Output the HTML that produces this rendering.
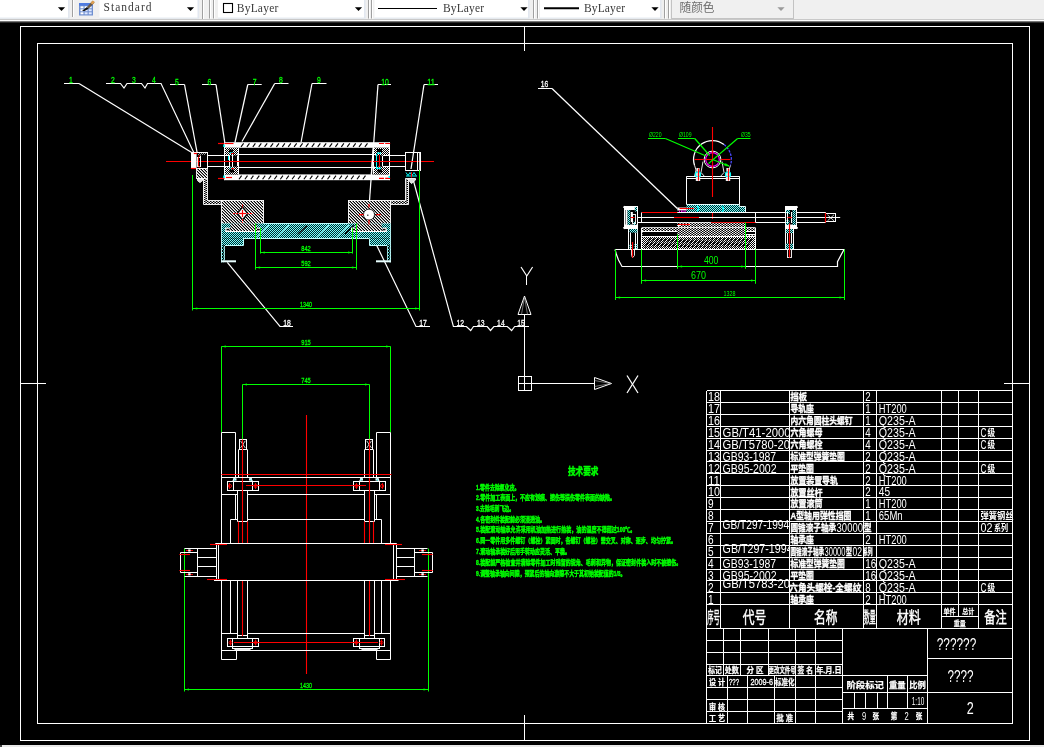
<!DOCTYPE html>
<html lang="zh"><head><meta charset="utf-8"><title>CAD</title>
<style>
html,body{margin:0;padding:0;background:#000;overflow:hidden}
svg{display:block;will-change:transform}
text{font-family:"Liberation Sans","Noto Sans CJK SC",sans-serif;white-space:pre}
.m{font-family:"Liberation Mono","Noto Sans CJK SC",monospace}
.s{font-family:"Liberation Serif","Noto Serif CJK SC",serif}
.cj{font-family:"Liberation Sans","Noto Sans CJK SC",sans-serif}
</style></head><body>
<svg width="1044" height="747" viewBox="0 0 1044 747">
<defs>
<pattern id="chk" width="2" height="2" patternUnits="userSpaceOnUse"><rect width="2" height="2" fill="#002a2a"/><rect width="1" height="1" fill="#7ff"/><rect x="1" y="1" width="1" height="1" fill="#7ff"/></pattern>
<pattern id="chks" width="2" height="3" patternUnits="userSpaceOnUse"><rect width="2" height="3" fill="#000"/><rect width="1" height="1" fill="#5ff"/><rect x="1" y="1.5" width="1" height="1" fill="#5ff"/></pattern>
<pattern id="wh" width="3" height="3" patternUnits="userSpaceOnUse"><rect width="3" height="3" fill="#000"/><rect x="0" y="0" width="1" height="1" fill="#fff"/><rect x="1" y="0" width="1" height="1" fill="#8c8c8c"/><rect x="1" y="1" width="1" height="1" fill="#fff"/><rect x="2" y="1" width="1" height="1" fill="#8c8c8c"/><rect x="0" y="2" width="1" height="1" fill="#8c8c8c"/><rect x="2" y="2" width="1" height="1" fill="#fff"/></pattern>
<pattern id="dots" width="2" height="2" patternUnits="userSpaceOnUse"><rect width="2" height="2" fill="#000"/><rect width="1" height="1" fill="#fff"/><rect x="1" y="1" width="1" height="1" fill="#fff"/></pattern>
<pattern id="dots2" width="3" height="2" patternUnits="userSpaceOnUse"><rect width="3" height="2" fill="#000"/><rect width="1.4" height="1" fill="#fff"/><rect x="1.5" y="1" width="1.4" height="1" fill="#fff"/></pattern>
<pattern id="wh2" width="2" height="2" patternUnits="userSpaceOnUse"><rect width="2" height="2" fill="#000"/><rect width="1" height="1" fill="#fff"/><rect x="1" y="1" width="1" height="1" fill="#fff"/></pattern>
</defs>
<rect x="0" y="0" width="1044" height="747" fill="#000"/>
<g id="toolbar">
<rect x="0" y="0" width="1044" height="21" fill="#f0f0f0"/>
<rect x="0" y="19" width="1044" height="1" fill="#c9c9c9"/>
<rect x="0" y="20" width="1044" height="1.2" fill="#fdfdfd"/>
<rect x="0" y="21.2" width="1044" height="0.8" fill="#8a8a8a"/>
<rect x="0" y="22" width="1044" height="1" fill="#2a2a2a"/>
<rect x="0" y="0" width="69" height="18" fill="#fff"/>
<rect x="68" y="0" width="1.6" height="18" fill="#e3e8f0"/>
<rect x="0" y="17.6" width="69.6" height="1" fill="#dfe6ee"/>
<polygon points="57.9,7.2 65.1,7.2 61.5,11" fill="#000" stroke="none" stroke-width="0"/>
<line x1="72.5" y1="0" x2="72.5" y2="17" stroke="#a0a0a0" stroke-width="1"/>
<line x1="73.5" y1="0" x2="73.5" y2="17" stroke="#fff" stroke-width="1"/>
<g><rect x="79" y="3" width="14" height="12.5" fill="#6f8fd0"/><rect x="79" y="3" width="14" height="2.6" fill="#4f7be0"/><rect x="80.5" y="6.3" width="3" height="2" fill="#fff"/><rect x="84.6" y="6.3" width="3" height="2" fill="#fff"/><rect x="88.7" y="6.3" width="3" height="2" fill="#e6eeff"/><rect x="80.5" y="9.3" width="3" height="2" fill="#fff"/><rect x="84.6" y="9.3" width="3" height="2" fill="#dfe8ff"/><rect x="88.7" y="9.3" width="3" height="2" fill="#dfe8ff"/><rect x="80.5" y="12.3" width="3" height="2" fill="#fff"/><rect x="84.6" y="12.3" width="3" height="2" fill="#dfe8ff"/><rect x="88.7" y="12.3" width="3" height="2" fill="#dfe8ff"/><path d="M82,11 L87,7 L88.6,8.8 L84.5,10.9 Z" fill="#111"/><path d="M87,7 L92.5,0.8 L94.6,2.4 L88.6,8.8 Z" fill="#6b5a44"/><path d="M90.5,3 L92.8,0.4 L94.8,2 L92.4,4.6 Z" fill="#e0a050"/></g>
<rect x="99.5" y="0" width="99" height="18" fill="#fff"/>
<rect x="197.5" y="0" width="1.6" height="18" fill="#e3e8f0"/>
<rect x="99.5" y="17.6" width="99.6" height="1" fill="#dfe6ee"/>
<polygon points="186.9,7.2 194.1,7.2 190.5,11" fill="#000" stroke="none" stroke-width="0"/>
<text x="103.5" y="11.2" font-size="11.5" fill="#3a3a3a" textLength="48" lengthAdjust="spacing" class="s">Standard</text>
<line x1="202.5" y1="0" x2="202.5" y2="19" stroke="#a0a0a0" stroke-width="1"/>
<line x1="203.5" y1="0" x2="203.5" y2="19" stroke="#fff" stroke-width="1"/>
<line x1="209.5" y1="0" x2="209.5" y2="18.5" stroke="#a0a0a0" stroke-width="1"/>
<line x1="210.5" y1="0" x2="210.5" y2="18.5" stroke="#fff" stroke-width="1"/>
<line x1="213.5" y1="0" x2="213.5" y2="18.5" stroke="#a0a0a0" stroke-width="1"/>
<line x1="214.5" y1="0" x2="214.5" y2="18.5" stroke="#fff" stroke-width="1"/>
<rect x="218" y="0" width="147" height="18" fill="#fff"/>
<rect x="364" y="0" width="1.6" height="18" fill="#e3e8f0"/>
<rect x="218" y="17.6" width="147.6" height="1" fill="#dfe6ee"/>
<polygon points="354.9,7.2 362.1,7.2 358.5,11" fill="#000" stroke="none" stroke-width="0"/>
<rect x="223.5" y="3.5" width="9" height="9" fill="#fff" stroke="#000" stroke-width="1.1"/>
<text x="236.8" y="11.8" font-size="11.5" fill="#3a3a3a" textLength="41.5" lengthAdjust="spacing" class="s">ByLayer</text>
<line x1="368.5" y1="0" x2="368.5" y2="18.5" stroke="#a0a0a0" stroke-width="1"/>
<line x1="369.5" y1="0" x2="369.5" y2="18.5" stroke="#fff" stroke-width="1"/>
<line x1="371.5" y1="0" x2="371.5" y2="18.5" stroke="#a0a0a0" stroke-width="1"/>
<line x1="372.5" y1="0" x2="372.5" y2="18.5" stroke="#fff" stroke-width="1"/>
<rect x="374.5" y="0" width="154.5" height="18" fill="#fff"/>
<rect x="528" y="0" width="1.6" height="18" fill="#e3e8f0"/>
<rect x="374.5" y="17.6" width="155.1" height="1" fill="#dfe6ee"/>
<polygon points="520.4,7.2 527.6,7.2 524,11" fill="#000" stroke="none" stroke-width="0"/>
<line x1="378" y1="8.5" x2="437" y2="8.5" stroke="#000" stroke-width="1"/>
<text x="443" y="11.8" font-size="11.5" fill="#3a3a3a" textLength="41" lengthAdjust="spacing" class="s">ByLayer</text>
<line x1="533.5" y1="0" x2="533.5" y2="18.5" stroke="#a0a0a0" stroke-width="1"/>
<line x1="534.5" y1="0" x2="534.5" y2="18.5" stroke="#fff" stroke-width="1"/>
<line x1="537.5" y1="0" x2="537.5" y2="18.5" stroke="#a0a0a0" stroke-width="1"/>
<line x1="538.5" y1="0" x2="538.5" y2="18.5" stroke="#fff" stroke-width="1"/>
<rect x="540" y="0" width="121" height="18" fill="#fff"/>
<rect x="660" y="0" width="1.6" height="18" fill="#e3e8f0"/>
<rect x="540" y="17.6" width="121.6" height="1" fill="#dfe6ee"/>
<polygon points="651.4,7.2 658.6,7.2 655,11" fill="#000" stroke="none" stroke-width="0"/>
<line x1="544" y1="8.2" x2="579" y2="8.2" stroke="#000" stroke-width="2"/>
<text x="584" y="11.8" font-size="11.5" fill="#3a3a3a" textLength="41" lengthAdjust="spacing" class="s">ByLayer</text>
<line x1="664.5" y1="0" x2="664.5" y2="18.5" stroke="#a0a0a0" stroke-width="1"/>
<line x1="665.5" y1="0" x2="665.5" y2="18.5" stroke="#fff" stroke-width="1"/>
<line x1="668.5" y1="0" x2="668.5" y2="18.5" stroke="#a0a0a0" stroke-width="1"/>
<line x1="669.5" y1="0" x2="669.5" y2="18.5" stroke="#fff" stroke-width="1"/>
<rect x="671" y="0" width="122.5" height="19" fill="#f0f0f0"/>
<rect x="671.5" y="-0.5" width="122" height="19" fill="none" stroke="#c3c3c3" stroke-width="1"/>
<polygon points="777.4,7.2 784.6,7.2 781,11" fill="#9a9a9a" stroke="none" stroke-width="0"/>
<text x="679.5" y="12" font-size="12" fill="#6d6d6d" textLength="35" lengthAdjust="spacingAndGlyphs" class="cj">随颜色</text>
</g>
<g id="frame" shape-rendering="crispEdges">
<rect x="20.5" y="26.5" width="1009" height="714" fill="none" stroke="#fff" stroke-width="1"/>
<rect x="37.5" y="43.5" width="975" height="680" fill="none" stroke="#fff" stroke-width="1"/>
<line x1="524.5" y1="26.5" x2="524.5" y2="51" stroke="#fff" stroke-width="1"/>
<line x1="524.5" y1="715" x2="524.5" y2="740.5" stroke="#fff" stroke-width="1"/>
<line x1="20.5" y1="383.5" x2="46" y2="383.5" stroke="#fff" stroke-width="1"/>
<line x1="1004" y1="383.5" x2="1029.5" y2="383.5" stroke="#fff" stroke-width="1"/>
<rect x="0" y="745" width="1044" height="2" fill="#e8e8e8"/>
<rect x="0" y="745.3" width="2" height="1.7" fill="#444"/>
</g>
<g id="ucs">
<rect x="518.5" y="376.5" width="13" height="14" fill="none" stroke="#fff" stroke-width="1"/>
<line x1="518.5" y1="383.5" x2="594.5" y2="383.5" stroke="#fff" stroke-width="1"/>
<line x1="524.5" y1="315" x2="524.5" y2="390.5" stroke="#fff" stroke-width="1"/>
<polygon points="594.5,377.5 611.5,383.5 594.5,389.5" fill="none" stroke="#fff" stroke-width="1"/>
<line x1="594.5" y1="380.5" x2="611" y2="383.5" stroke="#bbb" stroke-width="0.6"/>
<line x1="594.5" y1="386.5" x2="611" y2="383.5" stroke="#bbb" stroke-width="0.6"/>
<polygon points="524.5,296 518,314.5 531,314.5" fill="none" stroke="#fff" stroke-width="1"/>
<line x1="521.5" y1="314.5" x2="524.5" y2="297" stroke="#bbb" stroke-width="0.6"/>
<line x1="527.5" y1="314.5" x2="524.5" y2="297" stroke="#bbb" stroke-width="0.6"/>
<line x1="627" y1="375.5" x2="638" y2="393" stroke="#fff" stroke-width="1.25"/>
<line x1="638" y1="375.5" x2="627" y2="393" stroke="#fff" stroke-width="1.25"/>
<polyline points="521,267 526.8,276 532.6,267" fill="none" stroke="#fff" stroke-width="1.2"/>
<line x1="526.5" y1="276" x2="526.5" y2="285" stroke="#fff" stroke-width="1"/>
</g>
<g id="section">
<line x1="64" y1="83.5" x2="79" y2="83.5" stroke="#fff" stroke-width="1"/>
<line x1="79" y1="83.5" x2="192.5" y2="153" stroke="#fff" stroke-width="1.25"/>
<polyline points="106,83.5 120.5,83.5 124,88 127,83.5 141.5,83.5 145,88 147.5,83.5 161,83.5 194,153" fill="none" stroke="#fff" stroke-width="1.2"/>
<line x1="170" y1="84.5" x2="184.5" y2="84.5" stroke="#fff" stroke-width="1"/>
<line x1="184.5" y1="84.5" x2="197" y2="152" stroke="#fff" stroke-width="1.25"/>
<line x1="202" y1="84.5" x2="216" y2="84.5" stroke="#fff" stroke-width="1"/>
<line x1="216" y1="84.5" x2="225" y2="144" stroke="#fff" stroke-width="1.25"/>
<line x1="247.8" y1="84.5" x2="261.7" y2="84.5" stroke="#fff" stroke-width="1"/>
<line x1="247.8" y1="84.5" x2="235" y2="142.5" stroke="#fff" stroke-width="1.25"/>
<line x1="274.7" y1="83.5" x2="288.5" y2="83.5" stroke="#fff" stroke-width="1"/>
<line x1="274.7" y1="83.5" x2="242" y2="141.5" stroke="#fff" stroke-width="1.25"/>
<line x1="312" y1="83.5" x2="326.5" y2="83.5" stroke="#fff" stroke-width="1"/>
<line x1="312" y1="83.5" x2="301" y2="142.5" stroke="#fff" stroke-width="1.25"/>
<line x1="378" y1="84.5" x2="391" y2="84.5" stroke="#fff" stroke-width="1"/>
<line x1="378" y1="84.5" x2="368.8" y2="210" stroke="#fff" stroke-width="1.25"/>
<line x1="424" y1="84.5" x2="438" y2="84.5" stroke="#fff" stroke-width="1"/>
<line x1="424" y1="84.5" x2="411" y2="169" stroke="#fff" stroke-width="1.25"/>
<text x="71" y="83" font-size="9.4" fill="#00ff00" text-anchor="middle" textLength="3.8" lengthAdjust="spacingAndGlyphs" stroke="#00ff00" stroke-width="0.3">1</text>
<text x="113" y="83" font-size="9.4" fill="#00ff00" text-anchor="middle" textLength="3.8" lengthAdjust="spacingAndGlyphs" stroke="#00ff00" stroke-width="0.3">2</text>
<text x="134" y="83" font-size="9.4" fill="#00ff00" text-anchor="middle" textLength="3.8" lengthAdjust="spacingAndGlyphs" stroke="#00ff00" stroke-width="0.3">3</text>
<text x="154" y="83" font-size="9.4" fill="#00ff00" text-anchor="middle" textLength="3.8" lengthAdjust="spacingAndGlyphs" stroke="#00ff00" stroke-width="0.3">4</text>
<text x="177" y="84.5" font-size="9.4" fill="#00ff00" text-anchor="middle" textLength="3.8" lengthAdjust="spacingAndGlyphs" stroke="#00ff00" stroke-width="0.3">5</text>
<text x="209.5" y="84.5" font-size="9.4" fill="#00ff00" text-anchor="middle" textLength="3.8" lengthAdjust="spacingAndGlyphs" stroke="#00ff00" stroke-width="0.3">6</text>
<text x="254.7" y="84.5" font-size="9.4" fill="#00ff00" text-anchor="middle" textLength="3.8" lengthAdjust="spacingAndGlyphs" stroke="#00ff00" stroke-width="0.3">7</text>
<text x="281" y="83" font-size="9.4" fill="#00ff00" text-anchor="middle" textLength="3.8" lengthAdjust="spacingAndGlyphs" stroke="#00ff00" stroke-width="0.3">8</text>
<text x="319" y="83" font-size="9.4" fill="#00ff00" text-anchor="middle" textLength="3.8" lengthAdjust="spacingAndGlyphs" stroke="#00ff00" stroke-width="0.3">9</text>
<text x="385" y="84.5" font-size="9.4" fill="#00ff00" text-anchor="middle" textLength="7.6" lengthAdjust="spacingAndGlyphs" stroke="#00ff00" stroke-width="0.3">10</text>
<text x="431" y="84.5" font-size="9.4" fill="#00ff00" text-anchor="middle" textLength="7.6" lengthAdjust="spacingAndGlyphs" stroke="#00ff00" stroke-width="0.3">11</text>
<polyline points="413.5,181 453.4,326.5 466.4,326.5 470.7,330.5 473.5,326.5 487.2,326.5 490.5,330.5 493.9,326.5 507.3,326.5 511.6,330.5 514.7,326.5 529,326.5" fill="none" stroke="#fff" stroke-width="1.2"/>
<text x="460.2" y="325.5" font-size="9.4" fill="#fff" text-anchor="middle" textLength="7.6" lengthAdjust="spacingAndGlyphs" stroke="#fff" stroke-width="0.3">12</text>
<text x="480.8" y="325.5" font-size="9.4" fill="#fff" text-anchor="middle" textLength="7.6" lengthAdjust="spacingAndGlyphs" stroke="#fff" stroke-width="0.3">13</text>
<text x="500.9" y="325.5" font-size="9.4" fill="#fff" text-anchor="middle" textLength="7.6" lengthAdjust="spacingAndGlyphs" stroke="#fff" stroke-width="0.3">14</text>
<text x="521" y="325.5" font-size="9.4" fill="#fff" text-anchor="middle" textLength="7.6" lengthAdjust="spacingAndGlyphs" stroke="#fff" stroke-width="0.3">15</text>
<polyline points="376.5,245 416,326.5 430,326.5" fill="none" stroke="#fff" stroke-width="1.2"/>
<text x="423.1" y="325.5" font-size="9.4" fill="#fff" text-anchor="middle" textLength="7.6" lengthAdjust="spacingAndGlyphs" stroke="#fff" stroke-width="0.3">17</text>
<polyline points="227.3,262.3 280,326.5 293,326.5" fill="none" stroke="#fff" stroke-width="1.2"/>
<text x="287" y="325.5" font-size="9.4" fill="#fff" text-anchor="middle" textLength="7.6" lengthAdjust="spacingAndGlyphs" stroke="#fff" stroke-width="0.3">18</text>
<rect x="224.5" y="142.2" width="165" height="5.6" fill="#fff"/>
<rect x="224.5" y="174.4" width="165" height="5.8" fill="#fff"/>
<line x1="241" y1="146.8" x2="243.6" y2="143.4" stroke="#000" stroke-width="1.1"/>
<line x1="239" y1="179.2" x2="241.6" y2="175.6" stroke="#000" stroke-width="1.1"/>
<line x1="246.9" y1="146.8" x2="249.5" y2="143.4" stroke="#000" stroke-width="1.1"/>
<line x1="244.9" y1="179.2" x2="247.5" y2="175.6" stroke="#000" stroke-width="1.1"/>
<line x1="252.8" y1="146.8" x2="255.4" y2="143.4" stroke="#000" stroke-width="1.1"/>
<line x1="250.8" y1="179.2" x2="253.4" y2="175.6" stroke="#000" stroke-width="1.1"/>
<line x1="258.7" y1="146.8" x2="261.3" y2="143.4" stroke="#000" stroke-width="1.1"/>
<line x1="256.7" y1="179.2" x2="259.3" y2="175.6" stroke="#000" stroke-width="1.1"/>
<line x1="264.6" y1="146.8" x2="267.2" y2="143.4" stroke="#000" stroke-width="1.1"/>
<line x1="262.6" y1="179.2" x2="265.2" y2="175.6" stroke="#000" stroke-width="1.1"/>
<line x1="270.5" y1="146.8" x2="273.1" y2="143.4" stroke="#000" stroke-width="1.1"/>
<line x1="268.5" y1="179.2" x2="271.1" y2="175.6" stroke="#000" stroke-width="1.1"/>
<line x1="276.4" y1="146.8" x2="279" y2="143.4" stroke="#000" stroke-width="1.1"/>
<line x1="274.4" y1="179.2" x2="277" y2="175.6" stroke="#000" stroke-width="1.1"/>
<line x1="282.3" y1="146.8" x2="284.9" y2="143.4" stroke="#000" stroke-width="1.1"/>
<line x1="280.3" y1="179.2" x2="282.9" y2="175.6" stroke="#000" stroke-width="1.1"/>
<line x1="288.2" y1="146.8" x2="290.8" y2="143.4" stroke="#000" stroke-width="1.1"/>
<line x1="286.2" y1="179.2" x2="288.8" y2="175.6" stroke="#000" stroke-width="1.1"/>
<line x1="294.1" y1="146.8" x2="296.7" y2="143.4" stroke="#000" stroke-width="1.1"/>
<line x1="292.1" y1="179.2" x2="294.7" y2="175.6" stroke="#000" stroke-width="1.1"/>
<line x1="300" y1="146.8" x2="302.6" y2="143.4" stroke="#000" stroke-width="1.1"/>
<line x1="298" y1="179.2" x2="300.6" y2="175.6" stroke="#000" stroke-width="1.1"/>
<line x1="305.9" y1="146.8" x2="308.5" y2="143.4" stroke="#000" stroke-width="1.1"/>
<line x1="303.9" y1="179.2" x2="306.5" y2="175.6" stroke="#000" stroke-width="1.1"/>
<line x1="311.8" y1="146.8" x2="314.4" y2="143.4" stroke="#000" stroke-width="1.1"/>
<line x1="309.8" y1="179.2" x2="312.4" y2="175.6" stroke="#000" stroke-width="1.1"/>
<line x1="317.7" y1="146.8" x2="320.3" y2="143.4" stroke="#000" stroke-width="1.1"/>
<line x1="315.7" y1="179.2" x2="318.3" y2="175.6" stroke="#000" stroke-width="1.1"/>
<line x1="323.6" y1="146.8" x2="326.2" y2="143.4" stroke="#000" stroke-width="1.1"/>
<line x1="321.6" y1="179.2" x2="324.2" y2="175.6" stroke="#000" stroke-width="1.1"/>
<line x1="329.5" y1="146.8" x2="332.1" y2="143.4" stroke="#000" stroke-width="1.1"/>
<line x1="327.5" y1="179.2" x2="330.1" y2="175.6" stroke="#000" stroke-width="1.1"/>
<line x1="335.4" y1="146.8" x2="338" y2="143.4" stroke="#000" stroke-width="1.1"/>
<line x1="333.4" y1="179.2" x2="336" y2="175.6" stroke="#000" stroke-width="1.1"/>
<line x1="341.3" y1="146.8" x2="343.9" y2="143.4" stroke="#000" stroke-width="1.1"/>
<line x1="339.3" y1="179.2" x2="341.9" y2="175.6" stroke="#000" stroke-width="1.1"/>
<line x1="347.2" y1="146.8" x2="349.8" y2="143.4" stroke="#000" stroke-width="1.1"/>
<line x1="345.2" y1="179.2" x2="347.8" y2="175.6" stroke="#000" stroke-width="1.1"/>
<line x1="353.1" y1="146.8" x2="355.7" y2="143.4" stroke="#000" stroke-width="1.1"/>
<line x1="351.1" y1="179.2" x2="353.7" y2="175.6" stroke="#000" stroke-width="1.1"/>
<line x1="359" y1="146.8" x2="361.6" y2="143.4" stroke="#000" stroke-width="1.1"/>
<line x1="357" y1="179.2" x2="359.6" y2="175.6" stroke="#000" stroke-width="1.1"/>
<line x1="364.9" y1="146.8" x2="367.5" y2="143.4" stroke="#000" stroke-width="1.1"/>
<line x1="362.9" y1="179.2" x2="365.5" y2="175.6" stroke="#000" stroke-width="1.1"/>
<rect x="224.5" y="147.8" width="14.3" height="26.6" fill="url(#dots)"/>
<rect x="373" y="147.8" width="16.5" height="26.6" fill="url(#dots)"/>
<rect x="224.5" y="155.5" width="14.3" height="11.1" fill="#000"/>
<rect x="373" y="155.5" width="16.5" height="11.1" fill="#000"/>
<line x1="238.5" y1="147.8" x2="238.5" y2="174.4" stroke="#fff" stroke-width="1"/>
<line x1="373.5" y1="147.8" x2="373.5" y2="174.4" stroke="#fff" stroke-width="1"/>
<line x1="224.5" y1="142.2" x2="224.5" y2="180.2" stroke="#fff" stroke-width="1"/>
<line x1="389.5" y1="142.2" x2="389.5" y2="180.2" stroke="#fff" stroke-width="1"/>
<rect x="229" y="149.5" width="4" height="3" fill="#000"/>
<rect x="229.5" y="169.5" width="4.5" height="3" fill="#000"/>
<rect x="377" y="149" width="5" height="3" fill="#000"/>
<rect x="377.5" y="169.5" width="4.5" height="3" fill="#000"/>
<line x1="207.8" y1="155.5" x2="229.6" y2="155.5" stroke="#fff" stroke-width="1"/>
<line x1="207.8" y1="166.5" x2="229.6" y2="166.5" stroke="#fff" stroke-width="1"/>
<line x1="237.2" y1="154.5" x2="376.6" y2="154.5" stroke="#fff" stroke-width="1"/>
<line x1="237.2" y1="167.5" x2="376.6" y2="167.5" stroke="#fff" stroke-width="1"/>
<line x1="382.8" y1="155.5" x2="405.3" y2="155.5" stroke="#fff" stroke-width="1"/>
<line x1="382.8" y1="166.5" x2="405.3" y2="166.5" stroke="#fff" stroke-width="1"/>
<line x1="229.5" y1="155" x2="229.5" y2="167" stroke="#fff" stroke-width="1"/>
<line x1="232.5" y1="155" x2="232.5" y2="167" stroke="#fff" stroke-width="1"/>
<line x1="237.5" y1="156" x2="237.5" y2="166" stroke="#fff" stroke-width="1"/>
<line x1="229.6" y1="153.2" x2="233" y2="153.2" stroke="#00ffff" stroke-width="1.4"/>
<line x1="229.6" y1="168.3" x2="233" y2="168.3" stroke="#00ffff" stroke-width="1.4"/>
<line x1="228.5" y1="156" x2="228.5" y2="160" stroke="#00ffff" stroke-width="1"/>
<line x1="231" y1="153.5" x2="234" y2="153.5" stroke="#ff0000" stroke-width="1"/>
<line x1="231" y1="168.5" x2="234" y2="168.5" stroke="#ff0000" stroke-width="1"/>
<line x1="376.5" y1="155" x2="376.5" y2="167" stroke="#fff" stroke-width="1"/>
<line x1="379.5" y1="155" x2="379.5" y2="167" stroke="#fff" stroke-width="1"/>
<line x1="382.5" y1="156" x2="382.5" y2="166" stroke="#fff" stroke-width="1"/>
<line x1="377" y1="153.2" x2="381" y2="153.2" stroke="#00ffff" stroke-width="1.4"/>
<line x1="377" y1="168.3" x2="381" y2="168.3" stroke="#00ffff" stroke-width="1.4"/>
<line x1="376.5" y1="154" x2="376.5" y2="169" stroke="#00ffff" stroke-width="1"/>
<line x1="379.5" y1="155" x2="379.5" y2="167" stroke="#ff0000" stroke-width="1"/>
<line x1="218" y1="143.5" x2="224.5" y2="143.5" stroke="#ff0000" stroke-width="1.2"/>
<line x1="225" y1="143.5" x2="233.5" y2="143.5" stroke="#ff0000" stroke-width="1.2"/>
<line x1="218" y1="178.5" x2="224.5" y2="178.5" stroke="#ff0000" stroke-width="1.2"/>
<line x1="226" y1="177.5" x2="232" y2="177.5" stroke="#ff0000" stroke-width="1.2"/>
<path d="M379,143.5H391M379,178.4H391" stroke="#f00" stroke-width="1.2" stroke-dasharray="5 1.2"/>
<rect x="223.2" y="144.5" width="1.6" height="2.5" fill="#00ffff"/>
<rect x="223.2" y="175.5" width="1.6" height="2.5" fill="#00ffff"/>
<rect x="388.5" y="176" width="1.5" height="2" fill="#00ffff"/>
<line x1="166" y1="161.5" x2="434" y2="161.5" stroke="#ff0000" stroke-width="1.1"/>
<rect x="191.5" y="152.5" width="16" height="16" fill="none" stroke="#fff" stroke-width="1"/>
<rect x="191.2" y="152.6" width="5.4" height="16.4" fill="#fff"/>
<rect x="197.5" y="157.5" width="3" height="9" fill="none" stroke="#fff" stroke-width="0.9"/>
<line x1="200.5" y1="155.6" x2="200.5" y2="167" stroke="#fff" stroke-width="1"/>
<line x1="198.5" y1="157" x2="198.5" y2="166" stroke="#ff0000" stroke-width="0.9"/>
<line x1="193.8" y1="153.5" x2="197.2" y2="153.5" stroke="#ff0000" stroke-width="1.2"/>
<line x1="190.8" y1="168.5" x2="197" y2="168.5" stroke="#ff0000" stroke-width="1.2"/>
<rect x="198.5" y="155.3" width="1.5" height="1.3" fill="#ff0000"/>
<rect x="198.5" y="166.3" width="1.5" height="1.1" fill="#ff0000"/>
<rect x="198" y="153.4" width="8" height="1.2" fill="url(#dots)"/>
<rect x="196" y="168.8" width="11.8" height="10" fill="url(#wh)"/>
<rect x="196.5" y="168.5" width="11" height="10" fill="none" stroke="#fff" stroke-width="0.8"/>
<polygon points="197.5,178.5 202.5,178.5 202.5,180.6 200,182.6 197.5,180.6" fill="#ddd" stroke="#fff" stroke-width="0.9"/>
<polygon points="203.5,178.5 203.5,204.5 222.5,204.5 222.5,200.5 207.5,200.5 207.5,178.5" fill="url(#dots2)" stroke="#fff" stroke-width="0.9"/>
<rect x="405.5" y="152.5" width="15" height="18" fill="none" stroke="#fff" stroke-width="1"/>
<line x1="417.5" y1="152.6" x2="417.5" y2="170.6" stroke="#fff" stroke-width="1"/>
<line x1="419.5" y1="152.6" x2="419.5" y2="170.6" stroke="#fff" stroke-width="0.8"/>
<rect x="405.3" y="170.6" width="12.4" height="7.4" fill="#000"/>
<path d="M406,172.5l2,3l2,-3l2,3l2,-3l2,3M406,176h11" stroke="#0ff" stroke-width="1" fill="none"/>
<line x1="405.3" y1="170.5" x2="417.7" y2="170.5" stroke="#fff" stroke-width="1"/>
<line x1="411.5" y1="172" x2="411.5" y2="177.5" stroke="#ff0000" stroke-width="1"/>
<polygon points="408.5,178.5 415.5,178.5 415.5,180 411.5,183.6 408.5,180" fill="#ddd" stroke="#fff" stroke-width="0.9"/>
<polygon points="408.5,178.5 408.5,204.5 390.5,204.5 390.5,200.5 405.5,200.5 405.5,178.5" fill="url(#dots2)" stroke="#fff" stroke-width="0.9"/>
<rect x="221.6" y="200" width="42.2" height="23.4" fill="url(#wh)"/>
<rect x="221.5" y="200.5" width="42" height="23" fill="none" stroke="#fff" stroke-width="0.9"/>
<rect x="348.3" y="200" width="42.1" height="23.4" fill="url(#wh)"/>
<rect x="348.5" y="200.5" width="42" height="23" fill="none" stroke="#fff" stroke-width="0.9"/>
<rect x="221.5" y="223.4" width="169" height="15.2" fill="url(#chk)"/>
<rect x="221.5" y="238.6" width="21.5" height="6.8" fill="url(#chk)"/>
<rect x="369.5" y="238.6" width="21" height="6.8" fill="url(#chk)"/>
<rect x="221.3" y="245.4" width="3.5" height="17" fill="url(#chks)"/>
<rect x="387.4" y="245.4" width="3.4" height="17" fill="url(#chks)"/>
<line x1="263.8" y1="223.5" x2="348.3" y2="223.5" stroke="#bfffff" stroke-width="1.1"/>
<line x1="243" y1="238.5" x2="369.5" y2="238.5" stroke="#bfffff" stroke-width="1.1"/>
<polyline points="243.5,238.8 243.5,245.5 225,245.5" fill="none" stroke="#bfffff" stroke-width="1"/>
<polyline points="369.5,238.8 369.5,245.5 387,245.5" fill="none" stroke="#bfffff" stroke-width="1"/>
<line x1="221.5" y1="223.4" x2="221.5" y2="262.4" stroke="#bfffff" stroke-width="0.9"/>
<line x1="390.5" y1="223.4" x2="390.5" y2="262.4" stroke="#bfffff" stroke-width="0.9"/>
<line x1="224.5" y1="246" x2="224.5" y2="260.4" stroke="#bfffff" stroke-width="0.8"/>
<line x1="387.5" y1="246" x2="387.5" y2="260.4" stroke="#bfffff" stroke-width="0.8"/>
<line x1="221.3" y1="261.3" x2="236" y2="261.3" stroke="#e8ffff" stroke-width="2"/>
<line x1="376" y1="261.3" x2="390.8" y2="261.3" stroke="#e8ffff" stroke-width="2"/>
<line x1="298" y1="234" x2="307" y2="225.5" stroke="#000" stroke-width="1.2"/>
<line x1="345" y1="234" x2="354" y2="225.5" stroke="#000" stroke-width="1.2"/>
<line x1="257" y1="237.5" x2="269" y2="225" stroke="#9ff" stroke-width="0.9"/>
<line x1="277" y1="237.5" x2="289" y2="225" stroke="#9ff" stroke-width="0.9"/>
<line x1="317" y1="237.5" x2="329" y2="225" stroke="#9ff" stroke-width="0.9"/>
<line x1="337" y1="237.5" x2="349" y2="225" stroke="#9ff" stroke-width="0.9"/>
<line x1="356" y1="237.5" x2="368" y2="225" stroke="#9ff" stroke-width="0.9"/>
<rect x="230.3" y="223.4" width="26.5" height="4.6" fill="url(#wh)"/>
<rect x="225.3" y="228" width="35.7" height="3.6" fill="url(#wh)"/>
<line x1="225.3" y1="231.5" x2="261" y2="231.5" stroke="#fff" stroke-width="1.2"/>
<rect x="225.3" y="227.6" width="4" height="4" fill="#fff"/>
<rect x="257" y="227.6" width="4" height="4" fill="#fff"/>
<rect x="226.5" y="228.8" width="2.8" height="1.6" fill="#000"/>
<rect x="257" y="228.8" width="2.8" height="1.6" fill="#000"/>
<rect x="355.2" y="223.4" width="26.5" height="4.6" fill="url(#wh)"/>
<rect x="351" y="228" width="35.7" height="3.6" fill="url(#wh)"/>
<line x1="351" y1="231.5" x2="386.7" y2="231.5" stroke="#fff" stroke-width="1.2"/>
<rect x="351" y="227.6" width="4" height="4" fill="#fff"/>
<rect x="382.7" y="227.6" width="4" height="4" fill="#fff"/>
<rect x="352.2" y="228.8" width="2.8" height="1.6" fill="#000"/>
<rect x="382.7" y="228.8" width="2.8" height="1.6" fill="#000"/>
<polygon points="242.5,207 247.8,213.5 242.5,220 237.2,213.5" fill="#fff" stroke="#000" stroke-width="1.4"/>
<line x1="239" y1="213.5" x2="246" y2="213.5" stroke="#ff0000" stroke-width="1.2"/>
<line x1="242.5" y1="210" x2="242.5" y2="217" stroke="#ff0000" stroke-width="1.2"/>
<path d="M233,213.5h5M247,213.5h6.5M242.5,204.5v3.5M242.5,219v4" stroke="#f00" stroke-width="1" stroke-dasharray="2 1"/>
<circle cx="369" cy="214.6" r="5.5" fill="#fff" stroke="#000" stroke-width="0.8"/>
<path d="M359,214.6h4.6M376,214.6h4.6M369,204v3.5M369,219.8v4.8" stroke="#f00" stroke-width="1.1"/>
<rect x="367.2" y="214.6" width="1.2" height="1.2" fill="#000"/>
<line x1="192.5" y1="175" x2="192.5" y2="310.5" stroke="#00ff00" stroke-width="1"/>
<line x1="419.5" y1="170" x2="419.5" y2="310.5" stroke="#00ff00" stroke-width="1"/>
<line x1="192.8" y1="308.5" x2="419.5" y2="308.5" stroke="#00ff00" stroke-width="1"/>
<line x1="255.5" y1="223.4" x2="255.5" y2="269.7" stroke="#00ff00" stroke-width="1"/>
<line x1="356.5" y1="223.4" x2="356.5" y2="269.7" stroke="#00ff00" stroke-width="1"/>
<line x1="255.6" y1="267.5" x2="356.4" y2="267.5" stroke="#00ff00" stroke-width="1"/>
<line x1="260.5" y1="228" x2="260.5" y2="253.6" stroke="#00ff00" stroke-width="1"/>
<line x1="352.5" y1="228" x2="352.5" y2="253.6" stroke="#00ff00" stroke-width="1"/>
<line x1="260.3" y1="252.5" x2="352.5" y2="252.5" stroke="#00ff00" stroke-width="1"/>
<text x="306" y="250.8" font-size="7.5" fill="#00ff00" text-anchor="middle" textLength="9.5" lengthAdjust="spacingAndGlyphs" stroke="#00ff00" stroke-width="0.3">842</text>
<text x="306" y="265.8" font-size="7.5" fill="#00ff00" text-anchor="middle" textLength="9.5" lengthAdjust="spacingAndGlyphs" stroke="#00ff00" stroke-width="0.3">592</text>
<text x="306" y="307" font-size="7.5" fill="#00ff00" text-anchor="middle" textLength="12" lengthAdjust="spacingAndGlyphs" stroke="#00ff00" stroke-width="0.3">1340</text>
</g>
<path d="M192.8,308.5 l4.5,-1.1 v2.2 z M419.5,308.5 l-4.5,-1.1 v2.2 z" fill="#00ff00"/>
<path d="M255.6,267.5 l4.5,-1.1 v2.2 z M356.4,267.5 l-4.5,-1.1 v2.2 z" fill="#00ff00"/>
<path d="M260.3,252.5 l4.5,-1.1 v2.2 z M352.5,252.5 l-4.5,-1.1 v2.2 z" fill="#00ff00"/>
<line x1="373.3" y1="147.8" x2="371.4" y2="174.4" stroke="#fff" stroke-width="1.25"/>
<g id="side">
<line x1="538" y1="88.5" x2="552" y2="88.5" stroke="#fff" stroke-width="1"/>
<line x1="552" y1="88.5" x2="677.3" y2="208.5" stroke="#fff" stroke-width="1.25"/>
<text x="544.5" y="87" font-size="9.4" fill="#fff" text-anchor="middle" textLength="7.5" lengthAdjust="spacingAndGlyphs" stroke="#fff" stroke-width="0.3">16</text>
<path d="M694.6,165.5 A18.8,18.8 0 0 1 724,144.6" fill="none" stroke="#fff" stroke-width="1.25"/>
<path d="M724,144.6 A18.8,18.8 0 0 1 730.4,165.5" fill="none" stroke="#4848ff" stroke-width="1.3" stroke-dasharray="2.5 1.2"/>
<circle cx="712.5" cy="159.5" r="8.4" fill="none" stroke="#fff" stroke-width="1"/>
<circle cx="712.5" cy="159.5" r="6.8" fill="none" stroke="#ff00ff" stroke-width="1.2"/>
<polyline points="694.6,165.5 696,170 694.5,176.5" fill="none" stroke="#fff" stroke-width="0.9"/>
<polyline points="703,161.5 701,172.5 704.6,176.5" fill="none" stroke="#fff" stroke-width="0.9"/>
<polyline points="730.4,165.5 729,170 730.5,176.5" fill="none" stroke="#fff" stroke-width="0.9"/>
<polyline points="722,161.5 724,172.5 720.4,176.5" fill="none" stroke="#fff" stroke-width="0.9"/>
<line x1="686.3" y1="176.5" x2="739.7" y2="176.5" stroke="#fff" stroke-width="1"/>
<line x1="686.3" y1="178.5" x2="739.7" y2="178.5" stroke="#fff" stroke-width="1"/>
<line x1="686.5" y1="176.5" x2="686.5" y2="204.5" stroke="#fff" stroke-width="1"/>
<line x1="739.5" y1="176.5" x2="739.5" y2="204.5" stroke="#fff" stroke-width="1"/>
<circle cx="698" cy="174.5" r="2.6" fill="#ddd" stroke="#00ffff" stroke-width="1.1"/>
<rect x="695.8" y="177" width="4.4" height="4" fill="#eee"/>
<rect x="696.4" y="168" width="3.2" height="3.5" fill="#eee"/>
<line x1="698.5" y1="168.5" x2="698.5" y2="180.5" stroke="#ff0000" stroke-width="1.1"/>
<circle cx="728" cy="174.5" r="2.6" fill="#ddd" stroke="#00ffff" stroke-width="1.1"/>
<rect x="725.8" y="177" width="4.4" height="4" fill="#eee"/>
<rect x="726.4" y="168" width="3.2" height="3.5" fill="#eee"/>
<line x1="728.5" y1="168.5" x2="728.5" y2="180.5" stroke="#ff0000" stroke-width="1.1"/>
<line x1="712.5" y1="127" x2="712.5" y2="197" stroke="#ff0000" stroke-width="1.1"/>
<line x1="712.5" y1="205" x2="712.5" y2="219" stroke="#ff0000" stroke-width="1.1"/>
<line x1="694.5" y1="159.5" x2="704" y2="159.5" stroke="#ff0000" stroke-width="1.1"/>
<line x1="721" y1="159.5" x2="730.5" y2="159.5" stroke="#ff0000" stroke-width="1.1"/>
<line x1="705.5" y1="159.5" x2="712.5" y2="159.5" stroke="#ff0000" stroke-width="1.1"/>
<line x1="648" y1="138.5" x2="665.4" y2="138.5" stroke="#00ff00" stroke-width="1"/>
<line x1="665.4" y1="138.5" x2="706" y2="156" stroke="#00ff00" stroke-width="1.25"/>
<line x1="678" y1="138.5" x2="694.7" y2="138.5" stroke="#00ff00" stroke-width="1"/>
<line x1="694.7" y1="138.5" x2="709.6" y2="155.5" stroke="#00ff00" stroke-width="1.25"/>
<line x1="737.6" y1="138.5" x2="750.5" y2="138.5" stroke="#00ff00" stroke-width="1"/>
<line x1="737.6" y1="138.5" x2="708.4" y2="163.6" stroke="#00ff00" stroke-width="1.25"/>
<line x1="712.5" y1="159.5" x2="729" y2="166" stroke="#00ff00" stroke-width="1.25"/>
<polygon points="729,166 725.6,163.6 724.8,165.6" fill="#00ff00" stroke="#00ff00" stroke-width="0.6"/>
<text x="649" y="137.3" font-size="7.5" fill="#00ff00" textLength="12.5" lengthAdjust="spacingAndGlyphs">Ø220</text>
<text x="679" y="137.3" font-size="7.5" fill="#00ff00" textLength="12.5" lengthAdjust="spacingAndGlyphs">Ø109</text>
<text x="741" y="137.3" font-size="7.5" fill="#00ff00" textLength="9.5" lengthAdjust="spacingAndGlyphs">Ø35</text>
<rect x="686.6" y="204.5" width="53.1" height="8" fill="url(#chk)"/>
<rect x="739.7" y="206.8" width="5.9" height="5.7" fill="url(#chk)"/>
<line x1="686.6" y1="204.5" x2="739.7" y2="204.5" stroke="#e8ffff" stroke-width="1"/>
<polyline points="739.5,204.6 739.5,206.5 745.5,206.5 745.5,212.5" fill="none" stroke="#e8ffff" stroke-width="1"/>
<rect x="677.3" y="207.5" width="9.3" height="3" fill="#fff"/>
<rect x="679" y="210.6" width="7" height="1.8" fill="#ff00ff"/>
<rect x="680" y="210.6" width="1" height="1.8" fill="#000"/>
<rect x="682.5" y="210.6" width="1" height="1.8" fill="#000"/>
<rect x="684.6" y="210.6" width="0.7" height="1.8" fill="#000"/>
<line x1="679.5" y1="208.5" x2="694" y2="208.5" stroke="#ff0000" stroke-width="1.1"/>
<path d="M697,206 q3,3 0,5.5" stroke="#0ff" stroke-width="1.3" fill="none"/>
<path d="M722,206 q3,3 0,5.5" stroke="#0ff" stroke-width="1.3" fill="none"/>
<line x1="641.8" y1="212.5" x2="825.8" y2="212.5" stroke="#fff" stroke-width="1"/>
<line x1="624.4" y1="217.5" x2="840.2" y2="217.5" stroke="#fff" stroke-width="1"/>
<line x1="637.6" y1="222.5" x2="825.8" y2="222.5" stroke="#fff" stroke-width="1"/>
<line x1="641.5" y1="212.5" x2="641.5" y2="222.5" stroke="#fff" stroke-width="1"/>
<line x1="755.5" y1="212.5" x2="755.5" y2="222.5" stroke="#fff" stroke-width="1"/>
<line x1="641.8" y1="212.5" x2="677.3" y2="212.5" stroke="#ff0000" stroke-width="1.1"/>
<line x1="674" y1="217.5" x2="699" y2="217.5" stroke="#ff0000" stroke-width="1.1"/>
<line x1="711" y1="222.5" x2="755.4" y2="222.5" stroke="#ff0000" stroke-width="1.2"/>
<rect x="825.5" y="213.5" width="10" height="8" fill="none" stroke="#fff" stroke-width="1"/>
<line x1="827.5" y1="214.8" x2="834" y2="220.8" stroke="#fff" stroke-width="0.8"/>
<line x1="834" y1="214.8" x2="827.5" y2="220.8" stroke="#fff" stroke-width="0.8"/>
<line x1="825.5" y1="213" x2="825.5" y2="222.5" stroke="#ff0000" stroke-width="1.2"/>
<rect x="677.3" y="222.8" width="68.3" height="5" fill="url(#dots2)"/>
<rect x="641.8" y="227.8" width="113.6" height="8.4" fill="url(#dots2)"/>
<rect x="642.5" y="231.2" width="34.8" height="4.8" fill="#000"/>
<line x1="642" y1="231.5" x2="677.3" y2="231.5" stroke="#fff" stroke-width="1"/>
<rect x="745.8" y="231.3" width="9.2" height="2.9" fill="#000"/>
<line x1="745.8" y1="231.5" x2="755.4" y2="231.5" stroke="#fff" stroke-width="1"/>
<line x1="745.8" y1="234.5" x2="755.4" y2="234.5" stroke="#fff" stroke-width="1"/>
<line x1="641.8" y1="227.5" x2="755.4" y2="227.5" stroke="#fff" stroke-width="0.8"/>
<line x1="678" y1="224.5" x2="690" y2="224.5" stroke="#ff0000" stroke-width="1.1"/>
<line x1="677.5" y1="225.5" x2="681" y2="225.5" stroke="#fff" stroke-width="1"/>
<rect x="641.8" y="236.2" width="113.6" height="13.2" fill="url(#wh2)"/>
<line x1="645" y1="247.5" x2="650.5" y2="238.2" stroke="#000" stroke-width="1.15"/>
<line x1="648.9" y1="247.5" x2="654.4" y2="238.2" stroke="#000" stroke-width="1.15"/>
<line x1="652.8" y1="247.5" x2="658.3" y2="238.2" stroke="#000" stroke-width="1.15"/>
<line x1="656.7" y1="247.5" x2="662.2" y2="238.2" stroke="#000" stroke-width="1.15"/>
<line x1="660.6" y1="247.5" x2="666.1" y2="238.2" stroke="#000" stroke-width="1.15"/>
<line x1="664.5" y1="247.5" x2="670" y2="238.2" stroke="#000" stroke-width="1.15"/>
<line x1="668.4" y1="247.5" x2="673.9" y2="238.2" stroke="#000" stroke-width="1.15"/>
<line x1="672.3" y1="247.5" x2="677.8" y2="238.2" stroke="#000" stroke-width="1.15"/>
<line x1="676.2" y1="247.5" x2="681.7" y2="238.2" stroke="#000" stroke-width="1.15"/>
<line x1="680.1" y1="247.5" x2="685.6" y2="238.2" stroke="#000" stroke-width="1.15"/>
<line x1="684" y1="247.5" x2="689.5" y2="238.2" stroke="#000" stroke-width="1.15"/>
<line x1="687.9" y1="247.5" x2="693.4" y2="238.2" stroke="#000" stroke-width="1.15"/>
<line x1="691.8" y1="247.5" x2="697.3" y2="238.2" stroke="#000" stroke-width="1.15"/>
<line x1="695.7" y1="247.5" x2="701.2" y2="238.2" stroke="#000" stroke-width="1.15"/>
<line x1="699.6" y1="247.5" x2="705.1" y2="238.2" stroke="#000" stroke-width="1.15"/>
<line x1="703.5" y1="247.5" x2="709" y2="238.2" stroke="#000" stroke-width="1.15"/>
<line x1="707.4" y1="247.5" x2="712.9" y2="238.2" stroke="#000" stroke-width="1.15"/>
<line x1="711.3" y1="247.5" x2="716.8" y2="238.2" stroke="#000" stroke-width="1.15"/>
<line x1="715.2" y1="247.5" x2="720.7" y2="238.2" stroke="#000" stroke-width="1.15"/>
<line x1="719.1" y1="247.5" x2="724.6" y2="238.2" stroke="#000" stroke-width="1.15"/>
<line x1="723" y1="247.5" x2="728.5" y2="238.2" stroke="#000" stroke-width="1.15"/>
<line x1="726.9" y1="247.5" x2="732.4" y2="238.2" stroke="#000" stroke-width="1.15"/>
<line x1="730.8" y1="247.5" x2="736.3" y2="238.2" stroke="#000" stroke-width="1.15"/>
<line x1="734.7" y1="247.5" x2="740.2" y2="238.2" stroke="#000" stroke-width="1.15"/>
<line x1="738.6" y1="247.5" x2="744.1" y2="238.2" stroke="#000" stroke-width="1.15"/>
<line x1="742.5" y1="247.5" x2="748" y2="238.2" stroke="#000" stroke-width="1.15"/>
<line x1="746.4" y1="247.5" x2="751.9" y2="238.2" stroke="#000" stroke-width="1.15"/>
<rect x="641.5" y="236.5" width="114" height="13" fill="none" stroke="#fff" stroke-width="1"/>
<line x1="641.5" y1="227.8" x2="641.5" y2="249.4" stroke="#fff" stroke-width="1"/>
<line x1="755.5" y1="227.8" x2="755.5" y2="249.4" stroke="#fff" stroke-width="1"/>
<polyline points="615,249.5 844,249.5 837.5,261.6 837.5,266.5 622,266.5 618.5,260 616.3,254 615,249.5" fill="none" stroke="#fff" stroke-width="1.2"/>
<rect x="624.5" y="206.3" width="13.3" height="22.4" fill="#000"/>
<rect x="624.5" y="206.5" width="13" height="22" fill="none" stroke="#fff" stroke-width="1"/>
<rect x="625" y="206.5" width="12.3" height="3.5" fill="#fff"/>
<rect x="625" y="224.5" width="12.3" height="4" fill="#fff"/>
<rect x="785.2" y="206.3" width="11.4" height="22.4" fill="#000"/>
<rect x="785.5" y="206.5" width="11" height="22" fill="none" stroke="#fff" stroke-width="1"/>
<rect x="785.7" y="206.5" width="10.4" height="3.5" fill="#fff"/>
<rect x="785.7" y="224.5" width="10.4" height="4" fill="#fff"/>
<rect x="625.5" y="210" width="2.1" height="15" fill="#fff"/>
<rect x="627.6" y="210" width="2.6" height="15" fill="url(#chk)"/>
<rect x="630.8" y="212" width="2" height="10" fill="#fff"/>
<rect x="634.8" y="207" width="2.2" height="4.5" fill="url(#chk)"/>
<rect x="633.5" y="221.5" width="2.5" height="3.5" fill="url(#chk)"/>
<rect x="632.5" y="214.5" width="3" height="9" fill="none" stroke="#fff" stroke-width="0.9"/>
<line x1="630.8" y1="217.5" x2="634.5" y2="217.5" stroke="#ff0000" stroke-width="1.1"/>
<rect x="628.8" y="228.7" width="9" height="20.7" fill="#000"/>
<rect x="628.5" y="228.5" width="9" height="21" fill="none" stroke="#fff" stroke-width="1"/>
<rect x="629.5" y="229" width="7.8" height="3.6" fill="url(#chk)"/>
<rect x="629.5" y="244" width="2.5" height="5" fill="url(#chk)"/>
<rect x="634.5" y="244" width="2.8" height="5" fill="url(#chk)"/>
<line x1="630.5" y1="232.6" x2="630.5" y2="249" stroke="#fff" stroke-width="1"/>
<line x1="635.5" y1="232.6" x2="635.5" y2="249" stroke="#fff" stroke-width="1"/>
<polyline points="631.5,249.4 631.5,255.5 632.6,257.6 634.5,255.5 634.5,249.4" fill="none" stroke="#fff" stroke-width="0.9"/>
<line x1="632.5" y1="242" x2="632.5" y2="257.6" stroke="#ff0000" stroke-width="1.2"/>
<polygon points="623.2,207 624.5,206.3 624.5,208.5" fill="none" stroke="#fff" stroke-width="0.8"/>
<polygon points="623.2,228 624.5,228.7 624.5,226.5" fill="none" stroke="#fff" stroke-width="0.8"/>
<rect x="792.5" y="210" width="3.1" height="15" fill="url(#chk)"/>
<rect x="786" y="210" width="4" height="4" fill="url(#chk)"/>
<rect x="786" y="220.5" width="3.5" height="4.5" fill="url(#chk)"/>
<line x1="787.5" y1="212" x2="787.5" y2="223" stroke="#fff" stroke-width="1"/>
<line x1="791.5" y1="212" x2="791.5" y2="223" stroke="#fff" stroke-width="1"/>
<line x1="787.5" y1="217.5" x2="791.8" y2="217.5" stroke="#ff0000" stroke-width="1.2"/>
<rect x="785.2" y="228.7" width="8.3" height="20.7" fill="#000"/>
<rect x="785.5" y="228.5" width="8" height="21" fill="none" stroke="#fff" stroke-width="1"/>
<rect x="785.8" y="229" width="7.2" height="4" fill="url(#chk)"/>
<rect x="785.8" y="243.5" width="7.2" height="5.5" fill="url(#chk)"/>
<line x1="787.5" y1="233" x2="787.5" y2="243.5" stroke="#fff" stroke-width="1"/>
<line x1="791.5" y1="233" x2="791.5" y2="243.5" stroke="#fff" stroke-width="1"/>
<rect x="787.5" y="249.5" width="4" height="8" fill="none" stroke="#fff" stroke-width="0.9"/>
<line x1="789.5" y1="223.6" x2="789.5" y2="257.6" stroke="#ff0000" stroke-width="1.2"/>
<polygon points="798,207 796.5,206.3 796.5,208.5" fill="none" stroke="#fff" stroke-width="0.8"/>
<polygon points="798,228 796.5,228.7 796.5,226.5" fill="none" stroke="#fff" stroke-width="0.8"/>
<line x1="677.5" y1="234.4" x2="677.5" y2="268.8" stroke="#00ff00" stroke-width="1"/>
<line x1="745.5" y1="222.5" x2="745.5" y2="268.8" stroke="#00ff00" stroke-width="1"/>
<line x1="677.6" y1="266.5" x2="745.6" y2="266.5" stroke="#00ff00" stroke-width="1"/>
<line x1="641.5" y1="249.5" x2="641.5" y2="283.8" stroke="#00ff00" stroke-width="1"/>
<line x1="755.5" y1="249.5" x2="755.5" y2="283.8" stroke="#00ff00" stroke-width="1"/>
<line x1="641.6" y1="280.5" x2="755.5" y2="280.5" stroke="#00ff00" stroke-width="1"/>
<line x1="615.5" y1="249.5" x2="615.5" y2="300" stroke="#00ff00" stroke-width="1"/>
<line x1="844.5" y1="249.5" x2="844.5" y2="300" stroke="#00ff00" stroke-width="1"/>
<line x1="615.6" y1="297.5" x2="844" y2="297.5" stroke="#00ff00" stroke-width="1"/>
<text x="711.2" y="264" font-size="11" fill="#00ff00" text-anchor="middle" textLength="14.5" lengthAdjust="spacingAndGlyphs">400</text>
<text x="698.6" y="279" font-size="11" fill="#00ff00" text-anchor="middle" textLength="15" lengthAdjust="spacingAndGlyphs">670</text>
<text x="729.5" y="296.3" font-size="7" fill="#00ff00" text-anchor="middle" textLength="12" lengthAdjust="spacingAndGlyphs">1328</text>
</g>
<path d="M677.6,266.5 l4.5,-1.1 v2.2 z M745.6,266.5 l-4.5,-1.1 v2.2 z" fill="#00ff00"/>
<path d="M641.6,280.5 l4.5,-1.1 v2.2 z M755.5,280.5 l-4.5,-1.1 v2.2 z" fill="#00ff00"/>
<path d="M615.6,297.5 l4.5,-1.1 v2.2 z M844,297.5 l-4.5,-1.1 v2.2 z" fill="#00ff00"/>
<g id="plan">
<line x1="221.5" y1="346.5" x2="221.5" y2="432.5" stroke="#00ff00" stroke-width="1"/>
<line x1="390.5" y1="346.5" x2="390.5" y2="432.5" stroke="#00ff00" stroke-width="1"/>
<line x1="221.4" y1="346.5" x2="390.6" y2="346.5" stroke="#00ff00" stroke-width="1"/>
<line x1="242.5" y1="384.5" x2="242.5" y2="439.5" stroke="#00ff00" stroke-width="1"/>
<line x1="369.5" y1="384.5" x2="369.5" y2="439.5" stroke="#00ff00" stroke-width="1"/>
<line x1="242.5" y1="384.5" x2="369.5" y2="384.5" stroke="#00ff00" stroke-width="1"/>
<line x1="184.5" y1="548.5" x2="184.5" y2="691.5" stroke="#00ff00" stroke-width="1"/>
<line x1="428.5" y1="548.5" x2="428.5" y2="691.5" stroke="#00ff00" stroke-width="1"/>
<line x1="184.5" y1="689.5" x2="428" y2="689.5" stroke="#00ff00" stroke-width="1"/>
<text x="306" y="344.6" font-size="7.5" fill="#00ff00" text-anchor="middle" textLength="9.5" lengthAdjust="spacingAndGlyphs" stroke="#00ff00" stroke-width="0.3">915</text>
<text x="306" y="383" font-size="7.5" fill="#00ff00" text-anchor="middle" textLength="9.5" lengthAdjust="spacingAndGlyphs" stroke="#00ff00" stroke-width="0.3">745</text>
<text x="306" y="688" font-size="7.5" fill="#00ff00" text-anchor="middle" textLength="12" lengthAdjust="spacingAndGlyphs" stroke="#00ff00" stroke-width="0.3">1430</text>
<line x1="306.5" y1="415" x2="306.5" y2="674" stroke="#ff0000" stroke-width="1.1"/>
<polyline points="221.5,543.5 221.5,432.5 235.5,432.5 235.5,477.4" fill="none" stroke="#fff" stroke-width="1"/>
<rect x="239.5" y="439.5" width="7" height="10" fill="none" stroke="#fff" stroke-width="1"/>
<line x1="240.5" y1="440.8" x2="245.3" y2="448" stroke="#fff" stroke-width="0.8"/>
<line x1="245.3" y1="440.8" x2="240.5" y2="448" stroke="#fff" stroke-width="0.8"/>
<line x1="238.5" y1="449.4" x2="238.5" y2="477.4" stroke="#fff" stroke-width="1"/>
<line x1="247.5" y1="449.4" x2="247.5" y2="477.4" stroke="#fff" stroke-width="1"/>
<line x1="237.5" y1="490.8" x2="237.5" y2="521.5" stroke="#fff" stroke-width="1"/>
<line x1="247.5" y1="490.8" x2="247.5" y2="521.5" stroke="#fff" stroke-width="1"/>
<line x1="235.5" y1="494.2" x2="235.5" y2="519.5" stroke="#fff" stroke-width="1"/>
<rect x="227.5" y="481.5" width="31" height="9" fill="none" stroke="#fff" stroke-width="1"/>
<rect x="233.5" y="481.5" width="19" height="9" fill="none" stroke="#fff" stroke-width="1"/>
<polyline points="233,481.3 234.5,477.4" fill="none" stroke="#fff" stroke-width="1.2"/>
<polyline points="252.2,481.3 250.5,477.4" fill="none" stroke="#fff" stroke-width="1.2"/>
<rect x="233.5" y="478.2" width="3" height="2.4" fill="#dff"/>
<rect x="249" y="478.2" width="3" height="2.4" fill="#dff"/>
<rect x="234" y="479.5" width="1" height="1" fill="#00ffff"/>
<rect x="250.5" y="479.5" width="1" height="1" fill="#00ffff"/>
<circle cx="229.9" cy="486" r="1.6" fill="none" stroke="#ff0000" stroke-width="0.9"/>
<line x1="229.5" y1="483" x2="229.5" y2="489" stroke="#ff0000" stroke-width="0.9"/>
<circle cx="255.6" cy="486" r="1.6" fill="none" stroke="#ff0000" stroke-width="0.9"/>
<line x1="255.5" y1="483" x2="255.5" y2="489" stroke="#ff0000" stroke-width="0.9"/>
<polyline points="237.3,519.5 230.5,519.5 230.5,543.5" fill="none" stroke="#fff" stroke-width="1"/>
<line x1="237.5" y1="521.5" x2="247.5" y2="521.5" stroke="#fff" stroke-width="1"/>
<line x1="238.5" y1="521.5" x2="238.5" y2="543.5" stroke="#ff0000" stroke-width="1.1"/>
<line x1="247.5" y1="521.5" x2="247.5" y2="543.5" stroke="#ff0000" stroke-width="1.1"/>
<line x1="221.4" y1="494.5" x2="237.3" y2="494.5" stroke="#fff" stroke-width="1"/>
<line x1="221.5" y1="580.5" x2="221.5" y2="659.5" stroke="#fff" stroke-width="1"/>
<line x1="230.5" y1="580.5" x2="230.5" y2="633.5" stroke="#fff" stroke-width="1"/>
<line x1="237.5" y1="580.5" x2="237.5" y2="638.3" stroke="#fff" stroke-width="1"/>
<line x1="247.5" y1="580.5" x2="247.5" y2="638.3" stroke="#fff" stroke-width="1"/>
<line x1="221.4" y1="633.5" x2="237.4" y2="633.5" stroke="#fff" stroke-width="1"/>
<line x1="237.4" y1="635.5" x2="247.4" y2="635.5" stroke="#fff" stroke-width="1"/>
<rect x="227.5" y="638.5" width="31" height="8" fill="none" stroke="#fff" stroke-width="1"/>
<rect x="232.5" y="638.5" width="20" height="10" fill="none" stroke="#fff" stroke-width="1"/>
<polyline points="233.5,648.3 235,649.5 250,649.5 251.3,648.3" fill="none" stroke="#fff" stroke-width="0.9"/>
<circle cx="230.5" cy="642.6" r="1.5" fill="none" stroke="#ff0000" stroke-width="0.9"/>
<line x1="230.5" y1="639.5" x2="230.5" y2="645.5" stroke="#ff0000" stroke-width="0.9"/>
<circle cx="255.8" cy="642.6" r="1.5" fill="none" stroke="#ff0000" stroke-width="0.9"/>
<line x1="255.5" y1="639.5" x2="255.5" y2="645.5" stroke="#ff0000" stroke-width="0.9"/>
<polyline points="221.4,659.5 236.5,659.5 236.5,650.7" fill="none" stroke="#fff" stroke-width="1"/>
<line x1="242.5" y1="580.5" x2="242.5" y2="636" stroke="#ff0000" stroke-width="1.1"/>
<line x1="218.5" y1="543.5" x2="218.5" y2="580.5" stroke="#fff" stroke-width="1"/>
<line x1="216.5" y1="545" x2="216.5" y2="579.5" stroke="#fff" stroke-width="1"/>
<line x1="215.5" y1="543.5" x2="221.4" y2="543.5" stroke="#fff" stroke-width="1"/>
<line x1="214" y1="580.5" x2="221.4" y2="580.5" stroke="#fff" stroke-width="1"/>
<rect x="197.5" y="548.5" width="19" height="28" fill="none" stroke="#fff" stroke-width="1"/>
<line x1="197.8" y1="557.5" x2="216" y2="557.5" stroke="#fff" stroke-width="1"/>
<line x1="197.8" y1="566.5" x2="216" y2="566.5" stroke="#fff" stroke-width="1"/>
<polyline points="197.8,548.5 184.5,548.5" fill="none" stroke="#fff" stroke-width="1"/>
<polyline points="197.8,576.5 184.5,576.5" fill="none" stroke="#fff" stroke-width="1"/>
<polyline points="197.8,552.5 180.5,552.5 180.5,572.5 197.8,572.5" fill="none" stroke="#fff" stroke-width="1"/>
<line x1="179.4" y1="554.5" x2="190" y2="554.5" stroke="#ff0000" stroke-width="1.1"/>
<line x1="179.4" y1="570.5" x2="190" y2="570.5" stroke="#ff0000" stroke-width="1.1"/>
<line x1="186" y1="550.5" x2="193" y2="550.5" stroke="#ff0000" stroke-width="0.9"/>
<line x1="186" y1="574.5" x2="193" y2="574.5" stroke="#ff0000" stroke-width="0.9"/>
<rect x="188.2" y="549.4" width="2.4" height="2.2" fill="#fff"/>
<rect x="188.2" y="573.2" width="2.4" height="2.2" fill="#fff"/>
<line x1="210" y1="544.5" x2="227" y2="544.5" stroke="#ff0000" stroke-width="1.1"/>
<line x1="207" y1="579.5" x2="227" y2="579.5" stroke="#ff0000" stroke-width="1.1"/>
<line x1="242.5" y1="439.4" x2="242.5" y2="543.5" stroke="#ff0000" stroke-width="1.1"/>
<polyline points="390.5,543.5 390.5,432.5 376.5,432.5 376.5,477.4" fill="none" stroke="#fff" stroke-width="1"/>
<rect x="365.5" y="439.5" width="7" height="10" fill="none" stroke="#fff" stroke-width="1"/>
<line x1="371.5" y1="440.8" x2="366.7" y2="448" stroke="#fff" stroke-width="0.8"/>
<line x1="366.7" y1="440.8" x2="371.5" y2="448" stroke="#fff" stroke-width="0.8"/>
<line x1="373.5" y1="449.4" x2="373.5" y2="477.4" stroke="#fff" stroke-width="1"/>
<line x1="364.5" y1="449.4" x2="364.5" y2="477.4" stroke="#fff" stroke-width="1"/>
<line x1="374.5" y1="490.8" x2="374.5" y2="521.5" stroke="#fff" stroke-width="1"/>
<line x1="364.5" y1="490.8" x2="364.5" y2="521.5" stroke="#fff" stroke-width="1"/>
<line x1="376.5" y1="494.2" x2="376.5" y2="519.5" stroke="#fff" stroke-width="1"/>
<rect x="353.5" y="481.5" width="32" height="9" fill="none" stroke="#fff" stroke-width="1"/>
<rect x="359.5" y="481.5" width="20" height="9" fill="none" stroke="#fff" stroke-width="1"/>
<polyline points="379,481.3 377.5,477.4" fill="none" stroke="#fff" stroke-width="1.2"/>
<polyline points="359.8,481.3 361.5,477.4" fill="none" stroke="#fff" stroke-width="1.2"/>
<rect x="375.5" y="478.2" width="3" height="2.4" fill="#dff"/>
<rect x="360" y="478.2" width="3" height="2.4" fill="#dff"/>
<rect x="377" y="479.5" width="1" height="1" fill="#00ffff"/>
<rect x="360.5" y="479.5" width="1" height="1" fill="#00ffff"/>
<circle cx="382.1" cy="486" r="1.6" fill="none" stroke="#ff0000" stroke-width="0.9"/>
<line x1="382.5" y1="483" x2="382.5" y2="489" stroke="#ff0000" stroke-width="0.9"/>
<circle cx="356.4" cy="486" r="1.6" fill="none" stroke="#ff0000" stroke-width="0.9"/>
<line x1="356.5" y1="483" x2="356.5" y2="489" stroke="#ff0000" stroke-width="0.9"/>
<polyline points="374.7,519.5 381.5,519.5 381.5,543.5" fill="none" stroke="#fff" stroke-width="1"/>
<line x1="374.5" y1="521.5" x2="364.5" y2="521.5" stroke="#fff" stroke-width="1"/>
<line x1="373.5" y1="521.5" x2="373.5" y2="543.5" stroke="#ff0000" stroke-width="1.1"/>
<line x1="364.5" y1="521.5" x2="364.5" y2="543.5" stroke="#ff0000" stroke-width="1.1"/>
<line x1="390.6" y1="494.5" x2="374.7" y2="494.5" stroke="#fff" stroke-width="1"/>
<line x1="390.5" y1="580.5" x2="390.5" y2="659.5" stroke="#fff" stroke-width="1"/>
<line x1="381.5" y1="580.5" x2="381.5" y2="633.5" stroke="#fff" stroke-width="1"/>
<line x1="374.5" y1="580.5" x2="374.5" y2="638.3" stroke="#fff" stroke-width="1"/>
<line x1="364.5" y1="580.5" x2="364.5" y2="638.3" stroke="#fff" stroke-width="1"/>
<line x1="390.6" y1="633.5" x2="374.6" y2="633.5" stroke="#fff" stroke-width="1"/>
<line x1="374.6" y1="635.5" x2="364.6" y2="635.5" stroke="#fff" stroke-width="1"/>
<rect x="353.5" y="638.5" width="31" height="8" fill="none" stroke="#fff" stroke-width="1"/>
<rect x="359.5" y="638.5" width="20" height="10" fill="none" stroke="#fff" stroke-width="1"/>
<polyline points="378.5,648.3 377,649.5 362,649.5 360.7,648.3" fill="none" stroke="#fff" stroke-width="0.9"/>
<circle cx="381.5" cy="642.6" r="1.5" fill="none" stroke="#ff0000" stroke-width="0.9"/>
<line x1="381.5" y1="639.5" x2="381.5" y2="645.5" stroke="#ff0000" stroke-width="0.9"/>
<circle cx="356.2" cy="642.6" r="1.5" fill="none" stroke="#ff0000" stroke-width="0.9"/>
<line x1="356.5" y1="639.5" x2="356.5" y2="645.5" stroke="#ff0000" stroke-width="0.9"/>
<polyline points="390.6,659.5 376.5,659.5 376.5,650.7" fill="none" stroke="#fff" stroke-width="1"/>
<line x1="369.5" y1="580.5" x2="369.5" y2="636" stroke="#ff0000" stroke-width="1.1"/>
<line x1="393.5" y1="543.5" x2="393.5" y2="580.5" stroke="#fff" stroke-width="1"/>
<line x1="396.5" y1="545" x2="396.5" y2="579.5" stroke="#fff" stroke-width="1"/>
<line x1="396.5" y1="543.5" x2="390.6" y2="543.5" stroke="#fff" stroke-width="1"/>
<line x1="398" y1="580.5" x2="390.6" y2="580.5" stroke="#fff" stroke-width="1"/>
<rect x="396.5" y="548.5" width="18" height="28" fill="none" stroke="#fff" stroke-width="1"/>
<line x1="414.2" y1="557.5" x2="396" y2="557.5" stroke="#fff" stroke-width="1"/>
<line x1="414.2" y1="566.5" x2="396" y2="566.5" stroke="#fff" stroke-width="1"/>
<polyline points="414.2,548.5 427.5,548.5" fill="none" stroke="#fff" stroke-width="1"/>
<polyline points="414.2,576.5 427.5,576.5" fill="none" stroke="#fff" stroke-width="1"/>
<polyline points="414.2,552.5 432.5,552.5 432.5,572.5 414.2,572.5" fill="none" stroke="#fff" stroke-width="1"/>
<line x1="432.6" y1="554.5" x2="422" y2="554.5" stroke="#ff0000" stroke-width="1.1"/>
<line x1="432.6" y1="570.5" x2="422" y2="570.5" stroke="#ff0000" stroke-width="1.1"/>
<line x1="426" y1="550.5" x2="419" y2="550.5" stroke="#ff0000" stroke-width="0.9"/>
<line x1="426" y1="574.5" x2="419" y2="574.5" stroke="#ff0000" stroke-width="0.9"/>
<rect x="421.4" y="549.4" width="2.4" height="2.2" fill="#fff"/>
<rect x="421.4" y="573.2" width="2.4" height="2.2" fill="#fff"/>
<line x1="402" y1="544.5" x2="385" y2="544.5" stroke="#ff0000" stroke-width="1.1"/>
<line x1="405" y1="579.5" x2="385" y2="579.5" stroke="#ff0000" stroke-width="1.1"/>
<line x1="369.5" y1="439.4" x2="369.5" y2="543.5" stroke="#ff0000" stroke-width="1.1"/>
<line x1="221.4" y1="477.5" x2="390.6" y2="477.5" stroke="#fff" stroke-width="1"/>
<line x1="247.8" y1="494.5" x2="364.2" y2="494.5" stroke="#fff" stroke-width="1"/>
<line x1="247.5" y1="519.5" x2="364.5" y2="519.5" stroke="#fff" stroke-width="1"/>
<line x1="215.5" y1="543.5" x2="396.5" y2="543.5" stroke="#fff" stroke-width="1"/>
<line x1="214" y1="580.5" x2="398.5" y2="580.5" stroke="#fff" stroke-width="1"/>
<line x1="221.4" y1="474.5" x2="391.5" y2="474.5" stroke="#ff0000" stroke-width="1.2"/>
<line x1="246" y1="485.5" x2="366" y2="485.5" stroke="#ff0000" stroke-width="1.1"/>
<line x1="247.4" y1="633.5" x2="364.6" y2="633.5" stroke="#fff" stroke-width="1"/>
<line x1="221.4" y1="650.5" x2="390.6" y2="650.5" stroke="#fff" stroke-width="1"/>
<line x1="234" y1="642.5" x2="378" y2="642.5" stroke="#ff0000" stroke-width="1.1"/>
</g>
<path d="M221.4,346.5 l4.5,-1.1 v2.2 z M390.6,346.5 l-4.5,-1.1 v2.2 z" fill="#00ff00"/>
<path d="M242.5,384.5 l4.5,-1.1 v2.2 z M369.5,384.5 l-4.5,-1.1 v2.2 z" fill="#00ff00"/>
<path d="M184.5,689.5 l4.5,-1.1 v2.2 z M428,689.5 l-4.5,-1.1 v2.2 z" fill="#00ff00"/>
<g id="notes" class="cj">
<text x="583.2" y="475" font-size="9.8" fill="#00ff00" text-anchor="middle" textLength="30.5" lengthAdjust="spacingAndGlyphs" font-weight="bold" stroke="#00ff00" stroke-width="0.5">技术要求</text>
<text x="476" y="489.6" font-size="6.6" fill="#00ff00" textLength="43.5" lengthAdjust="spacingAndGlyphs" font-weight="bold" stroke="#00ff00" stroke-width="0.45">1.零件去除氧化皮。</text>
<text x="476" y="500.2" font-size="6.6" fill="#00ff00" textLength="139" lengthAdjust="spacingAndGlyphs" font-weight="bold" stroke="#00ff00" stroke-width="0.45">2.零件加工表面上，不应有划痕、擦伤等损伤零件表面的缺陷。</text>
<text x="476" y="511.2" font-size="6.6" fill="#00ff00" textLength="38" lengthAdjust="spacingAndGlyphs" font-weight="bold" stroke="#00ff00" stroke-width="0.45">3.去除毛刺飞边。</text>
<text x="476" y="521.8" font-size="6.6" fill="#00ff00" textLength="69" lengthAdjust="spacingAndGlyphs" font-weight="bold" stroke="#00ff00" stroke-width="0.45">4.各密封件装配前必须浸透油。</text>
<text x="476" y="532.2" font-size="6.6" fill="#00ff00" textLength="159.4" lengthAdjust="spacingAndGlyphs" font-weight="bold" stroke="#00ff00" stroke-width="0.45">5.装配滚动轴承允许采用机油加热进行热装，油的温度不得超过100℃。</text>
<text x="476" y="543.2" font-size="6.6" fill="#00ff00" textLength="200" lengthAdjust="spacingAndGlyphs" font-weight="bold" stroke="#00ff00" stroke-width="0.45">6.同一零件用多件螺钉（螺栓）紧固时，各螺钉（螺栓）需交叉、对称、逐步、均匀拧紧。</text>
<text x="476" y="553.9" font-size="6.6" fill="#00ff00" textLength="94" lengthAdjust="spacingAndGlyphs" font-weight="bold" stroke="#00ff00" stroke-width="0.45">7.滚动轴承装好后用手转动应灵活、平稳。</text>
<text x="476" y="565" font-size="6.6" fill="#00ff00" textLength="205.4" lengthAdjust="spacingAndGlyphs" font-weight="bold" stroke="#00ff00" stroke-width="0.45">8.装配前严格检查并清除零件加工时残留的锐角、毛刺和异物，保证密封件装入时不被擦伤。</text>
<text x="476" y="575.6" font-size="6.6" fill="#00ff00" textLength="149.5" lengthAdjust="spacingAndGlyphs" font-weight="bold" stroke="#00ff00" stroke-width="0.45">9.调整轴承轴向间隙，预紧后的轴向游隙不大于其初始装配值的1/3。</text>
</g>
<g id="table">
<g shape-rendering="crispEdges">
<line x1="706.5" y1="390.5" x2="1012.5" y2="390.5" stroke="#fff" stroke-width="1"/>
<line x1="706.5" y1="402.5" x2="1012.5" y2="402.5" stroke="#fff" stroke-width="1"/>
<line x1="706.5" y1="414.5" x2="1012.5" y2="414.5" stroke="#fff" stroke-width="1"/>
<line x1="706.5" y1="426.5" x2="1012.5" y2="426.5" stroke="#fff" stroke-width="1"/>
<line x1="706.5" y1="438.5" x2="1012.5" y2="438.5" stroke="#fff" stroke-width="1"/>
<line x1="706.5" y1="450.5" x2="1012.5" y2="450.5" stroke="#fff" stroke-width="1"/>
<line x1="706.5" y1="461.5" x2="1012.5" y2="461.5" stroke="#fff" stroke-width="1"/>
<line x1="706.5" y1="473.5" x2="1012.5" y2="473.5" stroke="#fff" stroke-width="1"/>
<line x1="706.5" y1="485.5" x2="1012.5" y2="485.5" stroke="#fff" stroke-width="1"/>
<line x1="706.5" y1="497.5" x2="1012.5" y2="497.5" stroke="#fff" stroke-width="1"/>
<line x1="706.5" y1="509.5" x2="1012.5" y2="509.5" stroke="#fff" stroke-width="1"/>
<line x1="706.5" y1="521.5" x2="1012.5" y2="521.5" stroke="#fff" stroke-width="1"/>
<line x1="706.5" y1="533.5" x2="1012.5" y2="533.5" stroke="#fff" stroke-width="1"/>
<line x1="706.5" y1="545.5" x2="1012.5" y2="545.5" stroke="#fff" stroke-width="1"/>
<line x1="706.5" y1="557.5" x2="1012.5" y2="557.5" stroke="#fff" stroke-width="1"/>
<line x1="706.5" y1="569.5" x2="1012.5" y2="569.5" stroke="#fff" stroke-width="1"/>
<line x1="706.5" y1="580.5" x2="1012.5" y2="580.5" stroke="#fff" stroke-width="1"/>
<line x1="706.5" y1="592.5" x2="1012.5" y2="592.5" stroke="#fff" stroke-width="1"/>
<line x1="706.5" y1="604.5" x2="1012.5" y2="604.5" stroke="#fff" stroke-width="1"/>
<line x1="706.5" y1="628.5" x2="1012.5" y2="628.5" stroke="#fff" stroke-width="1"/>
<line x1="706.5" y1="390.5" x2="706.5" y2="628.2" stroke="#fff" stroke-width="1"/>
<line x1="720.5" y1="390.5" x2="720.5" y2="628.2" stroke="#fff" stroke-width="1"/>
<line x1="789.5" y1="390.5" x2="789.5" y2="628.2" stroke="#fff" stroke-width="1"/>
<line x1="863.5" y1="390.5" x2="863.5" y2="628.2" stroke="#fff" stroke-width="1"/>
<line x1="876.5" y1="390.5" x2="876.5" y2="628.2" stroke="#fff" stroke-width="1"/>
<line x1="941.5" y1="390.5" x2="941.5" y2="628.2" stroke="#fff" stroke-width="1"/>
<line x1="958.5" y1="390.5" x2="958.5" y2="616" stroke="#fff" stroke-width="1"/>
<line x1="978.5" y1="390.5" x2="978.5" y2="628.2" stroke="#fff" stroke-width="1"/>
<line x1="941" y1="616.5" x2="978.5" y2="616.5" stroke="#fff" stroke-width="1"/>
</g>
<clipPath id="ccode"><rect x="720.7" y="380" width="68.3" height="240"/></clipPath>
<text x="708" y="401.2" font-size="13" fill="#fff" textLength="12" lengthAdjust="spacingAndGlyphs">18</text>
<text x="790.5" y="400.3" font-size="9.6" fill="#fff" textLength="16.4" lengthAdjust="spacingAndGlyphs" class="cj" font-weight="bold" stroke="#fff" stroke-width="0.35">挡板</text>
<text x="865.3" y="401.2" font-size="13" fill="#fff" textLength="5.4" lengthAdjust="spacingAndGlyphs">2</text>
<text x="708" y="413.1" font-size="13" fill="#fff" textLength="12" lengthAdjust="spacingAndGlyphs">17</text>
<text x="790.5" y="412.2" font-size="9.6" fill="#fff" textLength="23.3" lengthAdjust="spacingAndGlyphs" class="cj" font-weight="bold" stroke="#fff" stroke-width="0.35">导轨座</text>
<text x="865.3" y="413.1" font-size="13" fill="#fff" textLength="5.4" lengthAdjust="spacingAndGlyphs">1</text>
<text x="878.8" y="413.1" font-size="13" fill="#fff" textLength="28" lengthAdjust="spacingAndGlyphs">HT200</text>
<text x="708" y="425" font-size="13" fill="#fff" textLength="12" lengthAdjust="spacingAndGlyphs">16</text>
<text x="790.5" y="424.1" font-size="9.6" fill="#fff" textLength="62" lengthAdjust="spacingAndGlyphs" class="cj" font-weight="bold" stroke="#fff" stroke-width="0.35">内六角圆柱头螺钉</text>
<text x="865.3" y="425" font-size="13" fill="#fff" textLength="5.4" lengthAdjust="spacingAndGlyphs">1</text>
<text x="878.8" y="425" font-size="13" fill="#fff" textLength="36.8" lengthAdjust="spacingAndGlyphs">Q235-A</text>
<text x="708" y="436.9" font-size="13" fill="#fff" textLength="12" lengthAdjust="spacingAndGlyphs">15</text>
<g clip-path="url(#ccode)">
<text x="722.6" y="436.9" font-size="13" fill="#fff" textLength="68" lengthAdjust="spacingAndGlyphs">GB/T41-2000</text>
</g>
<text x="790.5" y="436" font-size="9.6" fill="#fff" textLength="32" lengthAdjust="spacingAndGlyphs" class="cj" font-weight="bold" stroke="#fff" stroke-width="0.35">六角螺母</text>
<text x="865.3" y="436.9" font-size="13" fill="#fff" textLength="5.4" lengthAdjust="spacingAndGlyphs">4</text>
<text x="878.8" y="436.9" font-size="13" fill="#fff" textLength="36.8" lengthAdjust="spacingAndGlyphs">Q235-A</text>
<text x="980.5" y="436.9" font-size="13" fill="#fff" textLength="6" lengthAdjust="spacingAndGlyphs">C</text>
<text x="987.5" y="436" font-size="9.6" fill="#fff" textLength="7.6" lengthAdjust="spacingAndGlyphs" class="cj" font-weight="bold">级</text>
<text x="708" y="448.8" font-size="13" fill="#fff" textLength="12" lengthAdjust="spacingAndGlyphs">14</text>
<g clip-path="url(#ccode)">
<text x="722.6" y="448.8" font-size="13" fill="#fff" textLength="80" lengthAdjust="spacingAndGlyphs">GB/T5780-2000</text>
</g>
<text x="790.5" y="447.9" font-size="9.6" fill="#fff" textLength="32" lengthAdjust="spacingAndGlyphs" class="cj" font-weight="bold" stroke="#fff" stroke-width="0.35">六角螺栓</text>
<text x="865.3" y="448.8" font-size="13" fill="#fff" textLength="5.4" lengthAdjust="spacingAndGlyphs">4</text>
<text x="878.8" y="448.8" font-size="13" fill="#fff" textLength="36.8" lengthAdjust="spacingAndGlyphs">Q235-A</text>
<text x="980.5" y="448.8" font-size="13" fill="#fff" textLength="6" lengthAdjust="spacingAndGlyphs">C</text>
<text x="987.5" y="447.9" font-size="9.6" fill="#fff" textLength="7.6" lengthAdjust="spacingAndGlyphs" class="cj" font-weight="bold">级</text>
<text x="708" y="460.7" font-size="13" fill="#fff" textLength="12" lengthAdjust="spacingAndGlyphs">13</text>
<g clip-path="url(#ccode)">
<text x="722.6" y="460.7" font-size="13" fill="#fff" textLength="53.5" lengthAdjust="spacingAndGlyphs">GB93-1987</text>
</g>
<text x="790.5" y="459.8" font-size="9.6" fill="#fff" textLength="54.3" lengthAdjust="spacingAndGlyphs" class="cj" font-weight="bold" stroke="#fff" stroke-width="0.35">标准型弹簧垫圈</text>
<text x="865.3" y="460.7" font-size="13" fill="#fff" textLength="5.4" lengthAdjust="spacingAndGlyphs">2</text>
<text x="878.8" y="460.7" font-size="13" fill="#fff" textLength="36.8" lengthAdjust="spacingAndGlyphs">Q235-A</text>
<text x="708" y="472.6" font-size="13" fill="#fff" textLength="12" lengthAdjust="spacingAndGlyphs">12</text>
<g clip-path="url(#ccode)">
<text x="722.6" y="472.6" font-size="13" fill="#fff" textLength="54" lengthAdjust="spacingAndGlyphs">GB95-2002</text>
</g>
<text x="790.5" y="471.7" font-size="9.6" fill="#fff" textLength="23.3" lengthAdjust="spacingAndGlyphs" class="cj" font-weight="bold" stroke="#fff" stroke-width="0.35">平垫圈</text>
<text x="865.3" y="472.6" font-size="13" fill="#fff" textLength="5.4" lengthAdjust="spacingAndGlyphs">2</text>
<text x="878.8" y="472.6" font-size="13" fill="#fff" textLength="36.8" lengthAdjust="spacingAndGlyphs">Q235-A</text>
<text x="980.5" y="472.6" font-size="13" fill="#fff" textLength="6" lengthAdjust="spacingAndGlyphs">C</text>
<text x="987.5" y="471.7" font-size="9.6" fill="#fff" textLength="7.6" lengthAdjust="spacingAndGlyphs" class="cj" font-weight="bold">级</text>
<text x="708" y="484.5" font-size="13" fill="#fff" textLength="12" lengthAdjust="spacingAndGlyphs">11</text>
<text x="790.5" y="483.6" font-size="9.6" fill="#fff" textLength="47.4" lengthAdjust="spacingAndGlyphs" class="cj" font-weight="bold" stroke="#fff" stroke-width="0.35">放置装置导轨</text>
<text x="865.3" y="484.5" font-size="13" fill="#fff" textLength="5.4" lengthAdjust="spacingAndGlyphs">2</text>
<text x="878.8" y="484.5" font-size="13" fill="#fff" textLength="28" lengthAdjust="spacingAndGlyphs">HT200</text>
<text x="708" y="496.4" font-size="13" fill="#fff" textLength="12" lengthAdjust="spacingAndGlyphs">10</text>
<text x="790.5" y="495.5" font-size="9.6" fill="#fff" textLength="32" lengthAdjust="spacingAndGlyphs" class="cj" font-weight="bold" stroke="#fff" stroke-width="0.35">放置丝杆</text>
<text x="865.3" y="496.4" font-size="13" fill="#fff" textLength="5.4" lengthAdjust="spacingAndGlyphs">2</text>
<text x="878.8" y="496.4" font-size="13" fill="#fff" textLength="11.3" lengthAdjust="spacingAndGlyphs">45</text>
<text x="708" y="508.3" font-size="13" fill="#fff" textLength="5.6" lengthAdjust="spacingAndGlyphs">9</text>
<text x="790.5" y="507.4" font-size="9.6" fill="#fff" textLength="32" lengthAdjust="spacingAndGlyphs" class="cj" font-weight="bold" stroke="#fff" stroke-width="0.35">放置滚筒</text>
<text x="865.3" y="508.3" font-size="13" fill="#fff" textLength="5.4" lengthAdjust="spacingAndGlyphs">1</text>
<text x="878.8" y="508.3" font-size="13" fill="#fff" textLength="28" lengthAdjust="spacingAndGlyphs">HT200</text>
<text x="708" y="520.2" font-size="13" fill="#fff" textLength="5.6" lengthAdjust="spacingAndGlyphs">8</text>
<text x="790.5" y="519.3" font-size="9.6" fill="#fff" textLength="61" lengthAdjust="spacingAndGlyphs" class="cj" font-weight="bold" stroke="#fff" stroke-width="0.35">A型轴用弹性挡圈</text>
<text x="865.3" y="520.2" font-size="13" fill="#fff" textLength="5.4" lengthAdjust="spacingAndGlyphs">1</text>
<text x="878.8" y="520.2" font-size="13" fill="#fff" textLength="23.8" lengthAdjust="spacingAndGlyphs">65Mn</text>
<text x="980.5" y="519.2" font-size="8.6" fill="#fff" textLength="33" lengthAdjust="spacingAndGlyphs" class="cj" font-weight="bold">弹簧钢丝</text>
<text x="708" y="532.1" font-size="13" fill="#fff" textLength="5.6" lengthAdjust="spacingAndGlyphs">7</text>
<g clip-path="url(#ccode)">
<text x="722.6" y="528.7" font-size="13" fill="#fff" textLength="66.5" lengthAdjust="spacingAndGlyphs">GB/T297-1994</text>
</g>
<text x="790.5" y="531.2" font-size="9.6" fill="#fff" textLength="45.7" lengthAdjust="spacingAndGlyphs" class="cj" font-weight="bold" stroke="#fff" stroke-width="0.35">圆锥滚子轴承</text>
<text x="836.6" y="532.1" font-size="13" fill="#fff" textLength="26.4" lengthAdjust="spacingAndGlyphs">30000</text>
<text x="864" y="531.2" font-size="9.6" fill="#fff" textLength="7.5" lengthAdjust="spacingAndGlyphs" class="cj" font-weight="bold" stroke="#fff" stroke-width="0.35">型</text>
<text x="980.5" y="532.1" font-size="13" fill="#fff" textLength="12" lengthAdjust="spacingAndGlyphs">02</text>
<text x="994" y="531.2" font-size="9.6" fill="#fff" textLength="14" lengthAdjust="spacingAndGlyphs" class="cj" font-weight="bold">系列</text>
<text x="708" y="544" font-size="13" fill="#fff" textLength="5.6" lengthAdjust="spacingAndGlyphs">6</text>
<text x="790.5" y="543.1" font-size="9.6" fill="#fff" textLength="23.3" lengthAdjust="spacingAndGlyphs" class="cj" font-weight="bold" stroke="#fff" stroke-width="0.35">轴承座</text>
<text x="865.3" y="544" font-size="13" fill="#fff" textLength="5.4" lengthAdjust="spacingAndGlyphs">2</text>
<text x="878.8" y="544" font-size="13" fill="#fff" textLength="28" lengthAdjust="spacingAndGlyphs">HT200</text>
<text x="708" y="555.9" font-size="13" fill="#fff" textLength="5.6" lengthAdjust="spacingAndGlyphs">5</text>
<g clip-path="url(#ccode)">
<text x="722.6" y="552.5" font-size="13" fill="#fff" textLength="70" lengthAdjust="spacingAndGlyphs">GB/T297-1994</text>
</g>
<text x="790.5" y="555" font-size="9.6" fill="#fff" textLength="33.6" lengthAdjust="spacingAndGlyphs" class="cj" font-weight="bold" stroke="#fff" stroke-width="0.35">圆锥滚子轴承</text>
<text x="824.5" y="555.9" font-size="13" fill="#fff" textLength="21" lengthAdjust="spacingAndGlyphs">30000</text>
<text x="846" y="555" font-size="9.6" fill="#fff" textLength="6" lengthAdjust="spacingAndGlyphs" class="cj" font-weight="bold" stroke="#fff" stroke-width="0.35">型</text>
<text x="852.5" y="555.9" font-size="13" fill="#fff" textLength="9.5" lengthAdjust="spacingAndGlyphs">02</text>
<text x="863" y="555" font-size="9.6" fill="#fff" textLength="9.5" lengthAdjust="spacingAndGlyphs" class="cj" font-weight="bold" stroke="#fff" stroke-width="0.35">系列</text>
<text x="708" y="567.8" font-size="13" fill="#fff" textLength="5.6" lengthAdjust="spacingAndGlyphs">4</text>
<g clip-path="url(#ccode)">
<text x="722.6" y="567.8" font-size="13" fill="#fff" textLength="53.5" lengthAdjust="spacingAndGlyphs">GB93-1987</text>
</g>
<text x="790.5" y="566.9" font-size="9.6" fill="#fff" textLength="54.3" lengthAdjust="spacingAndGlyphs" class="cj" font-weight="bold" stroke="#fff" stroke-width="0.35">标准型弹簧垫圈</text>
<text x="865.3" y="567.8" font-size="13" fill="#fff" textLength="11" lengthAdjust="spacingAndGlyphs">16</text>
<text x="878.8" y="567.8" font-size="13" fill="#fff" textLength="36.8" lengthAdjust="spacingAndGlyphs">Q235-A</text>
<text x="708" y="579.7" font-size="13" fill="#fff" textLength="5.6" lengthAdjust="spacingAndGlyphs">3</text>
<g clip-path="url(#ccode)">
<text x="722.6" y="579.7" font-size="13" fill="#fff" textLength="54" lengthAdjust="spacingAndGlyphs">GB95-2002</text>
</g>
<text x="790.5" y="578.8" font-size="9.6" fill="#fff" textLength="23.3" lengthAdjust="spacingAndGlyphs" class="cj" font-weight="bold" stroke="#fff" stroke-width="0.35">平垫圈</text>
<text x="865.3" y="579.7" font-size="13" fill="#fff" textLength="11" lengthAdjust="spacingAndGlyphs">16</text>
<text x="878.8" y="579.7" font-size="13" fill="#fff" textLength="36.8" lengthAdjust="spacingAndGlyphs">Q235-A</text>
<text x="708" y="591.6" font-size="13" fill="#fff" textLength="5.6" lengthAdjust="spacingAndGlyphs">2</text>
<g clip-path="url(#ccode)">
<text x="722.6" y="588.2" font-size="13" fill="#fff" textLength="80" lengthAdjust="spacingAndGlyphs">GB/T5783-2000</text>
</g>
<text x="789.3" y="590.7" font-size="9.6" fill="#fff" textLength="72" lengthAdjust="spacingAndGlyphs" class="cj" font-weight="bold" stroke="#fff" stroke-width="0.35">六角头螺栓-全螺纹</text>
<text x="865.3" y="591.6" font-size="13" fill="#fff" textLength="5.4" lengthAdjust="spacingAndGlyphs">8</text>
<text x="878.8" y="591.6" font-size="13" fill="#fff" textLength="36.8" lengthAdjust="spacingAndGlyphs">Q235-A</text>
<text x="980.5" y="591.6" font-size="13" fill="#fff" textLength="6" lengthAdjust="spacingAndGlyphs">C</text>
<text x="987.5" y="590.7" font-size="9.6" fill="#fff" textLength="7.6" lengthAdjust="spacingAndGlyphs" class="cj" font-weight="bold">级</text>
<text x="708" y="603.5" font-size="13" fill="#fff" textLength="5.6" lengthAdjust="spacingAndGlyphs">1</text>
<text x="790.5" y="602.6" font-size="9.6" fill="#fff" textLength="23.3" lengthAdjust="spacingAndGlyphs" class="cj" font-weight="bold" stroke="#fff" stroke-width="0.35">轴承座</text>
<text x="865.3" y="603.5" font-size="13" fill="#fff" textLength="5.4" lengthAdjust="spacingAndGlyphs">2</text>
<text x="878.8" y="603.5" font-size="13" fill="#fff" textLength="28" lengthAdjust="spacingAndGlyphs">HT200</text>
<text x="713.6" y="623" font-size="15.5" fill="#fff" text-anchor="middle" textLength="12.6" lengthAdjust="spacingAndGlyphs" class="cj" font-weight="normal" stroke="#fff" stroke-width="0.45">序号</text>
<text x="754.6" y="623" font-size="15.5" fill="#fff" text-anchor="middle" textLength="23.5" lengthAdjust="spacingAndGlyphs" class="cj" font-weight="normal" stroke="#fff" stroke-width="0.45">代号</text>
<text x="825.7" y="623" font-size="15.5" fill="#fff" text-anchor="middle" textLength="23.5" lengthAdjust="spacingAndGlyphs" class="cj" font-weight="normal" stroke="#fff" stroke-width="0.45">名称</text>
<text x="869.8" y="623" font-size="15.5" fill="#fff" text-anchor="middle" textLength="11.8" lengthAdjust="spacingAndGlyphs" class="cj" font-weight="normal" stroke="#fff" stroke-width="0.45">数量</text>
<text x="908.7" y="623" font-size="15.5" fill="#fff" text-anchor="middle" textLength="23.8" lengthAdjust="spacingAndGlyphs" class="cj" font-weight="normal" stroke="#fff" stroke-width="0.45">材料</text>
<text x="995.5" y="623" font-size="15.5" fill="#fff" text-anchor="middle" textLength="22.5" lengthAdjust="spacingAndGlyphs" class="cj" font-weight="normal" stroke="#fff" stroke-width="0.45">备注</text>
<text x="949.5" y="613.5" font-size="7" fill="#fff" text-anchor="middle" textLength="12" lengthAdjust="spacingAndGlyphs" class="cj" font-weight="bold" stroke="#fff" stroke-width="0.2">单件</text>
<text x="968.3" y="613.5" font-size="7" fill="#fff" text-anchor="middle" textLength="12" lengthAdjust="spacingAndGlyphs" class="cj" font-weight="bold" stroke="#fff" stroke-width="0.2">总计</text>
<text x="959.8" y="625.5" font-size="7" fill="#fff" text-anchor="middle" textLength="12" lengthAdjust="spacingAndGlyphs" class="cj" font-weight="bold" stroke="#fff" stroke-width="0.2">重量</text>
<g shape-rendering="crispEdges">
<line x1="706.5" y1="628.2" x2="706.5" y2="723.5" stroke="#fff" stroke-width="1"/>
<line x1="706.5" y1="640.5" x2="842.8" y2="640.5" stroke="#fff" stroke-width="1"/>
<line x1="706.5" y1="652.5" x2="842.8" y2="652.5" stroke="#fff" stroke-width="1"/>
<line x1="706.5" y1="664.5" x2="842.8" y2="664.5" stroke="#fff" stroke-width="1"/>
<line x1="706.5" y1="675.5" x2="842.8" y2="675.5" stroke="#fff" stroke-width="1"/>
<line x1="706.5" y1="687.5" x2="842.8" y2="687.5" stroke="#fff" stroke-width="1"/>
<line x1="706.5" y1="699.5" x2="842.8" y2="699.5" stroke="#fff" stroke-width="1"/>
<line x1="706.5" y1="711.5" x2="842.8" y2="711.5" stroke="#fff" stroke-width="1"/>
<line x1="723.5" y1="628.2" x2="723.5" y2="675.3" stroke="#fff" stroke-width="1"/>
<line x1="740.5" y1="628.2" x2="740.5" y2="675.3" stroke="#fff" stroke-width="1"/>
<line x1="768.5" y1="628.2" x2="768.5" y2="675.3" stroke="#fff" stroke-width="1"/>
<line x1="727.5" y1="675.3" x2="727.5" y2="723.5" stroke="#fff" stroke-width="1"/>
<line x1="747.5" y1="675.3" x2="747.5" y2="723.5" stroke="#fff" stroke-width="1"/>
<line x1="774.5" y1="675.3" x2="774.5" y2="723.5" stroke="#fff" stroke-width="1"/>
<line x1="795.5" y1="628.2" x2="795.5" y2="723.5" stroke="#fff" stroke-width="1"/>
<line x1="815.5" y1="628.2" x2="815.5" y2="723.5" stroke="#fff" stroke-width="1"/>
<line x1="842.5" y1="628.2" x2="842.5" y2="723.5" stroke="#fff" stroke-width="1"/>
<line x1="927.5" y1="628.2" x2="927.5" y2="723.5" stroke="#fff" stroke-width="1"/>
<line x1="842.8" y1="675.5" x2="927.5" y2="675.5" stroke="#fff" stroke-width="1"/>
<line x1="842.8" y1="692.5" x2="927.5" y2="692.5" stroke="#fff" stroke-width="1"/>
<line x1="842.8" y1="708.5" x2="927.5" y2="708.5" stroke="#fff" stroke-width="1"/>
<line x1="887.5" y1="675.3" x2="887.5" y2="708.2" stroke="#fff" stroke-width="1"/>
<line x1="907.5" y1="675.3" x2="907.5" y2="708.2" stroke="#fff" stroke-width="1"/>
<line x1="854.5" y1="692.2" x2="854.5" y2="708.2" stroke="#fff" stroke-width="1"/>
<line x1="865.5" y1="692.2" x2="865.5" y2="708.2" stroke="#fff" stroke-width="1"/>
<line x1="877.5" y1="692.2" x2="877.5" y2="708.2" stroke="#fff" stroke-width="1"/>
<line x1="927.5" y1="658.5" x2="1012.5" y2="658.5" stroke="#fff" stroke-width="1"/>
<line x1="927.5" y1="692.5" x2="1012.5" y2="692.5" stroke="#fff" stroke-width="1"/>
</g>
<text x="708.2" y="673.3" font-size="7.6" fill="#fff" textLength="13.5" lengthAdjust="spacingAndGlyphs" class="cj" font-weight="bold" stroke="#fff" stroke-width="0.25">标记</text>
<text x="724.8" y="673.3" font-size="7.6" fill="#fff" textLength="14" lengthAdjust="spacingAndGlyphs" class="cj" font-weight="bold" stroke="#fff" stroke-width="0.25">处数</text>
<text x="746.5" y="673.3" font-size="7.6" fill="#fff" textLength="17" lengthAdjust="spacingAndGlyphs" class="cj" font-weight="bold" stroke="#fff" stroke-width="0.25">分 区</text>
<text x="768.6" y="673.3" font-size="7.6" fill="#fff" textLength="27" lengthAdjust="spacingAndGlyphs" class="cj" font-weight="bold" stroke="#fff" stroke-width="0.25">更改文件号</text>
<text x="797.6" y="673.3" font-size="7.6" fill="#fff" textLength="15.5" lengthAdjust="spacingAndGlyphs" class="cj" font-weight="bold" stroke="#fff" stroke-width="0.25">签 名</text>
<text x="816.2" y="673.3" font-size="7.6" fill="#fff" textLength="25.5" lengthAdjust="spacingAndGlyphs" class="cj" font-weight="bold" stroke="#fff" stroke-width="0.25">年.月.日</text>
<text x="709" y="685.4" font-size="7.6" fill="#fff" textLength="16" lengthAdjust="spacingAndGlyphs" class="cj" font-weight="bold" stroke="#fff" stroke-width="0.25">设 计</text>
<text x="729" y="684.6" font-size="9" fill="#fff" textLength="10" lengthAdjust="spacingAndGlyphs" stroke="#fff" stroke-width="0.3">???</text>
<text x="750.5" y="685" font-size="9.5" fill="#fff" textLength="22.5" lengthAdjust="spacingAndGlyphs" stroke="#fff" stroke-width="0.3">2009-6</text>
<text x="775" y="685.4" font-size="7.6" fill="#fff" textLength="19.5" lengthAdjust="spacingAndGlyphs" class="cj" font-weight="bold" stroke="#fff" stroke-width="0.25">标准化</text>
<text x="709" y="709.6" font-size="7.6" fill="#fff" textLength="16" lengthAdjust="spacingAndGlyphs" class="cj" font-weight="bold" stroke="#fff" stroke-width="0.25">审 核</text>
<text x="709" y="721.4" font-size="7.6" fill="#fff" textLength="16" lengthAdjust="spacingAndGlyphs" class="cj" font-weight="bold" stroke="#fff" stroke-width="0.25">工 艺</text>
<text x="776.5" y="721.4" font-size="7.6" fill="#fff" textLength="16.5" lengthAdjust="spacingAndGlyphs" class="cj" font-weight="bold" stroke="#fff" stroke-width="0.25">批 准</text>
<text x="846.5" y="688" font-size="8.4" fill="#fff" textLength="37.5" lengthAdjust="spacingAndGlyphs" class="cj" font-weight="bold" stroke="#fff" stroke-width="0.25">阶段标记</text>
<text x="889" y="688" font-size="8.4" fill="#fff" textLength="16.5" lengthAdjust="spacingAndGlyphs" class="cj" font-weight="bold" stroke="#fff" stroke-width="0.25">重量</text>
<text x="909.3" y="688" font-size="8.4" fill="#fff" textLength="16.5" lengthAdjust="spacingAndGlyphs" class="cj" font-weight="bold" stroke="#fff" stroke-width="0.25">比例</text>
<text x="911.8" y="704.6" font-size="10.5" fill="#fff" textLength="12.5" lengthAdjust="spacingAndGlyphs">1:10</text>
<text x="847.5" y="719.3" font-size="8" fill="#fff" textLength="6.5" lengthAdjust="spacingAndGlyphs" class="cj" font-weight="bold" stroke="#fff" stroke-width="0.25">共</text>
<text x="862" y="719.6" font-size="10" fill="#fff" textLength="4.2" lengthAdjust="spacingAndGlyphs">9</text>
<text x="872.5" y="719.3" font-size="8" fill="#fff" textLength="6.5" lengthAdjust="spacingAndGlyphs" class="cj" font-weight="bold" stroke="#fff" stroke-width="0.25">张</text>
<text x="890.8" y="719.3" font-size="8" fill="#fff" textLength="6.5" lengthAdjust="spacingAndGlyphs" class="cj" font-weight="bold" stroke="#fff" stroke-width="0.25">第</text>
<text x="904.5" y="719.6" font-size="10" fill="#fff" textLength="4.2" lengthAdjust="spacingAndGlyphs">2</text>
<text x="915.8" y="719.3" font-size="8" fill="#fff" textLength="6.5" lengthAdjust="spacingAndGlyphs" class="cj" font-weight="bold" stroke="#fff" stroke-width="0.25">张</text>
<text x="956.5" y="649.8" font-size="17" fill="#fff" text-anchor="middle" textLength="39.5" lengthAdjust="spacingAndGlyphs">??????</text>
<text x="960.5" y="682.4" font-size="17" fill="#fff" text-anchor="middle" textLength="26" lengthAdjust="spacingAndGlyphs">????</text>
<text x="970.2" y="714.4" font-size="17" fill="#fff" text-anchor="middle" textLength="7" lengthAdjust="spacingAndGlyphs">2</text>
</g>
</svg>
</body></html>
